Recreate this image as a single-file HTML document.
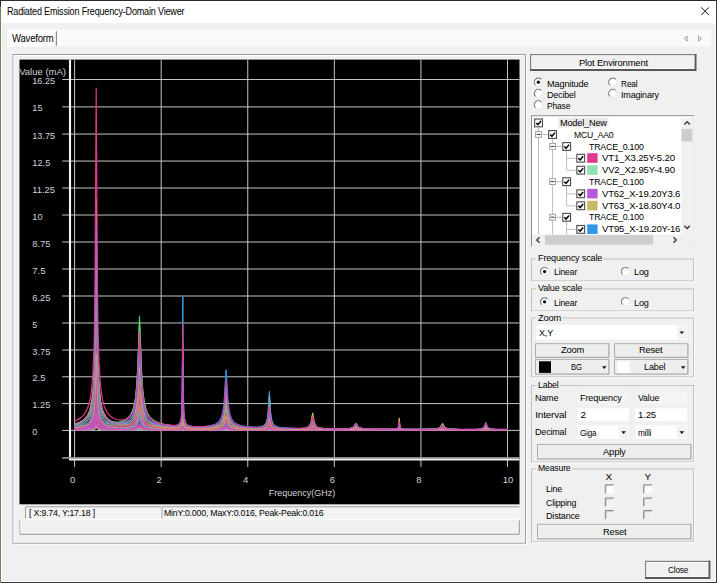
<!DOCTYPE html>
<html lang="en"><head><meta charset="utf-8"><title>Radiated Emission Frequency-Domain Viewer</title>
<style>
html,body{margin:0;padding:0;}
body{width:717px;height:583px;overflow:hidden;position:relative;background:#f0f0f0;
 font-family:"Liberation Sans",Arial,sans-serif;}
.b{position:absolute;box-sizing:border-box;}
.t{position:absolute;white-space:nowrap;line-height:12px;height:12px;transform-origin:0 50%;}
.plot{position:absolute;left:0;top:0;}
.ui{position:absolute;left:0;top:0;}
</style></head><body>
<svg class="ui" width="717" height="583" viewBox="0 0 717 583">
<rect x="0" y="0" width="717" height="583" fill="#fff"/>
<rect x="2" y="23" width="713" height="558" fill="#f0f0f0"/>
<rect x="0" y="0" width="717" height="1" fill="#2b2b2b"/>
<rect x="716" y="0" width="1" height="583" fill="#3a3a3a"/>
<rect x="0" y="582" width="717" height="1" fill="#3a3a3a"/>
<rect x="0" y="0" width="1" height="583" fill="#74835a"/>
<rect x="0" y="0" width="1" height="6.5" fill="#2b2b2b"/>
<path d="M701.2 7.4L708.9 15.1M708.9 7.4L701.2 15.1" stroke="#111" stroke-width="1" fill="none"/>
<rect x="7" y="29.6" width="704" height="16.8" fill="#fafafa"/>
<rect x="10.2" y="30.6" width="46" height="15.8" fill="#fff"/>
<rect x="55.8" y="31.2" width="1" height="14.6" fill="#707070"/>
<path d="M687.2 36.1V41.1L684.2 38.6Z M698.6 36.1V41.1L701.6 38.6Z" stroke="#8c8c8c" stroke-width="0.8" fill="none"/>
<rect x="13" y="54.5" width="512.5" height="488.8" fill="none" stroke="#9d9d9d" stroke-width="1"/>
<path d="M14 543V55.5H525" stroke="#fff" stroke-width="1" fill="none"/>
<path d="M526.5 54.5V544.3H13" stroke="#fff" stroke-width="1" fill="none" opacity="0.9"/>
<rect x="25" y="506.3" width="136" height="12.4" fill="#f3f3f3"/>
<path d="M25.5 518.7V506.8H161" stroke="#a0a0a0" stroke-width="1" fill="none"/>
<rect x="161.5" y="506.3" width="358" height="12.4" fill="#f3f3f3"/>
<path d="M162 518.7V506.8H519.5" stroke="#a0a0a0" stroke-width="1" fill="none"/>
<path d="M25 519.2H519.5" stroke="#fff" stroke-width="1" fill="none"/>
<path d="M20 520.5V534.3H519.3V520.5" stroke="#9a9a9a" stroke-width="1" fill="none"/>
<path d="M21 520.5V533.3" stroke="#fff" stroke-width="1" fill="none"/>
</svg>
<svg class="plot" width="717" height="583" viewBox="0 0 717 583">
<rect x="19.5" y="59.6" width="500" height="444.7" fill="#000"/>
<path d="M62.2 430.40H519.5M62.2 403.59H519.5M62.2 376.79H519.5M62.2 349.98H519.5M62.2 322.99H519.5M62.2 296.00H519.5M62.2 269.01H519.5M62.2 242.02H519.5M62.2 215.03H519.5M62.2 188.04H519.5M62.2 161.05H519.5M62.2 134.06H519.5M62.2 106.89H519.5M62.2 79.53H519.5" stroke="#c6c6c6" stroke-width="1" fill="none"/>
<path d="M74.60 59.6V467M161.18 59.6V467M247.76 59.6V467M334.34 59.6V467M420.92 59.6V467M507.50 59.6V467" stroke="#c6c6c6" stroke-width="1" fill="none"/>
<g fill="none" stroke-linejoin="round">
<polyline stroke="#90e0b0" stroke-width="0.9" points="74.6,426.7 82.1,425.6 84.6,424.8 87.5,423.2 89.5,421.4 91.0,419.1 93.0,412.7 94.3,401.9 95.0,388.4 96.2,327.8 97.8,395.6 99.0,409.6 100.7,417.1 103.0,421.0 105.9,423.1 108.9,423.9 112.9,424.2 119.4,423.3 123.9,421.7 128.3,418.6 130.8,415.5 133.2,410.3 134.3,406.2 136.3,392.8 137.8,369.6 139.5,324.2 142.1,384.5 143.3,397.4 144.8,406.2 147.2,413.5 148.7,416.3 150.7,418.7 155.2,421.9 161.7,424.3 171.1,425.9 177.1,426.0 179.6,425.1 181.1,422.5 181.8,417.9 182.3,405.7 182.8,350.2 183.2,399.8 183.7,416.6 184.2,420.5 184.9,423.7 186.1,425.4 188.5,426.7 195.0,427.5 208.5,427.9 215.6,427.6 219.6,426.8 221.8,425.6 223.4,423.5 224.4,420.8 226.1,412.0 227.9,420.7 228.7,423.1 229.8,424.9 230.8,426.0 232.8,427.0 235.3,427.7 239.8,428.2 254.7,428.7 264.5,428.3 266.4,427.5 267.7,426.1 268.3,424.2 269.4,418.4 270.5,424.2 271.3,426.4 272.0,427.1 274.1,428.3 280.1,428.9 301.5,429.1 307.8,428.9 310.0,428.3 311.0,427.7 312.7,424.7 314.4,427.7 315.7,428.5 318.5,429.0 323.4,429.2 350.3,429.2 353.7,428.5 356.0,427.1 359.4,428.9 363.7,429.3 397.2,429.5 398.4,429.2 399.3,427.7 399.9,429.1 401.5,429.5 432.7,429.5 439.8,429.0 442.6,427.2 444.1,428.5 445.3,429.0 449.3,429.5 481.6,429.5 483.9,429.2 485.6,427.8 487.8,429.1 491.0,429.6 507.5,429.7"/>
<polyline stroke="#b858d8" stroke-width="0.9" points="74.6,424.6 79.6,423.1 83.1,421.3 85.0,419.8 88.0,416.2 89.5,413.4 91.0,408.5 92.8,398.0 94.1,378.8 94.9,352.9 96.2,225.3 97.4,342.3 98.0,368.4 99.0,389.5 100.5,403.7 102.6,412.3 103.8,415.0 105.5,417.5 106.9,419.2 109.9,421.2 114.4,422.8 117.4,423.2 122.9,422.9 125.1,422.4 128.9,420.5 130.6,418.9 133.3,414.5 135.3,408.0 137.0,395.8 139.5,350.3 141.8,392.1 142.8,402.0 144.8,412.0 146.8,416.7 148.7,419.4 150.6,421.2 155.2,423.6 161.2,425.3 170.6,426.5 176.6,426.6 179.1,426.1 180.1,425.3 181.1,423.7 181.9,419.3 182.3,411.6 182.8,363.6 183.2,404.8 183.8,419.3 184.4,423.0 185.1,424.9 186.6,426.2 188.5,427.0 192.0,427.4 198.5,427.5 208.0,427.1 215.6,425.7 218.4,424.3 219.9,423.0 222.1,419.4 223.6,414.1 224.7,405.6 226.1,388.1 227.9,409.2 229.0,415.8 230.3,419.9 232.3,423.0 235.3,425.2 239.3,426.6 244.3,427.4 249.8,427.9 259.7,428.0 263.2,427.6 265.4,426.9 266.9,425.3 267.9,422.7 269.4,410.7 270.7,421.7 271.1,423.5 272.2,425.7 273.4,426.9 275.3,427.8 281.1,428.5 300.5,428.9 307.5,428.2 309.0,427.8 310.3,426.8 311.2,425.4 312.7,420.6 314.5,426.0 315.7,427.4 318.1,428.4 323.4,428.9 339.8,429.2 349.8,428.8 352.1,428.3 353.7,427.4 356.0,425.1 358.2,427.5 359.4,428.2 361.7,428.8 372.7,429.3 395.9,429.3 397.5,429.0 398.5,428.2 399.3,424.1 400.1,428.2 401.0,429.1 402.7,429.4 435.9,429.3 440.2,428.6 442.6,426.7 444.9,428.6 448.5,429.3 455.6,429.5 475.8,429.4 480.6,428.9 483.1,428.0 484.6,426.1 485.9,422.5 487.5,426.9 488.6,428.0 490.5,428.8 496.6,429.4 507.5,429.4"/>
<polyline stroke="#c8b868" stroke-width="0.9" points="74.6,424.0 79.6,422.3 82.6,420.6 85.0,418.5 87.5,415.3 89.5,411.1 90.8,406.5 92.8,393.8 94.0,374.6 94.9,342.7 96.2,197.9 97.5,335.8 98.2,366.5 99.2,386.8 100.7,401.5 101.7,406.6 103.0,411.2 105.9,416.7 108.4,419.3 110.9,421.0 114.4,422.4 117.9,423.2 121.9,423.6 125.5,423.2 127.7,422.6 130.8,420.7 132.3,419.2 133.8,416.6 135.3,412.6 136.8,404.6 137.8,393.6 139.5,367.4 142.1,403.0 143.4,410.9 145.1,416.5 147.2,420.1 148.4,421.4 151.0,423.1 154.8,424.7 160.7,426.0 175.1,427.3 179.6,427.3 181.1,426.8 181.9,425.0 182.3,421.7 182.8,403.4 183.4,422.9 183.9,425.7 185.1,427.2 192.0,428.0 208.0,428.0 215.9,427.3 219.6,426.0 221.8,424.3 222.8,422.7 223.6,420.8 224.7,416.0 226.1,406.0 227.6,416.1 228.7,421.0 230.3,424.2 232.3,425.9 236.3,427.3 242.8,428.1 252.2,428.2 259.7,427.6 261.7,427.1 263.5,426.4 265.6,424.5 267.2,420.9 268.3,412.8 269.4,395.4 270.7,415.1 271.3,419.5 272.1,422.5 273.6,425.0 275.6,426.6 277.7,427.3 281.6,428.1 289.1,428.6 300.0,428.5 304.8,428.0 307.8,426.9 310.0,424.8 310.9,422.6 312.7,412.8 314.4,422.3 315.9,425.6 317.2,426.8 318.9,427.6 323.9,428.5 339.0,429.1 349.2,428.7 353.1,427.3 356.0,423.8 359.2,427.6 362.8,428.7 373.2,429.3 395.0,429.1 397.0,428.6 398.3,427.1 399.3,418.2 399.8,425.0 400.5,427.5 401.9,428.8 404.0,429.2 413.5,429.5 426.8,429.4 436.7,428.8 439.8,427.5 441.0,426.2 442.3,423.6 442.8,423.4 444.1,426.2 445.8,427.9 449.8,429.0 460.2,429.5 479.3,429.5 482.1,429.4 484.1,428.8 485.9,427.0 487.6,428.8 490.2,429.4 507.5,429.7"/>
<polyline stroke="#3098e8" stroke-width="0.9" points="74.6,425.7 78.6,425.0 81.6,424.0 84.6,422.6 87.0,420.7 89.1,418.1 90.8,414.4 92.8,406.1 93.9,394.6 94.9,372.1 96.2,276.5 97.4,364.3 98.0,383.6 99.0,399.4 100.1,408.3 102.0,415.1 104.5,419.4 106.4,421.1 108.9,422.6 112.4,423.6 116.9,423.9 121.9,423.4 124.9,422.5 127.3,421.2 129.4,419.7 131.8,416.7 133.2,414.0 135.3,406.5 136.8,395.5 137.8,381.4 139.5,344.8 141.2,380.5 142.3,395.5 143.8,406.6 145.1,411.7 146.3,414.9 148.0,417.9 150.2,420.4 154.2,422.9 158.2,424.3 165.2,425.6 174.1,426.0 177.1,425.2 179.1,423.9 180.1,422.2 181.0,418.5 181.6,413.4 182.1,403.5 182.8,296.7 183.2,379.8 183.8,410.1 184.6,418.3 185.6,422.2 186.6,423.9 187.6,424.9 189.5,425.9 194.0,426.8 198.5,426.9 204.0,426.6 209.9,425.8 214.4,424.5 215.9,423.8 218.5,421.8 219.9,420.0 221.4,417.1 222.4,413.9 223.9,404.8 226.1,369.9 227.9,399.3 228.7,407.3 229.8,413.5 231.2,418.0 233.4,421.5 235.9,423.6 241.3,425.8 249.3,427.0 257.2,427.2 261.6,426.5 263.2,425.9 265.2,424.3 266.9,421.0 267.9,415.3 269.4,391.4 270.5,410.9 271.1,417.0 272.0,421.0 273.2,423.8 275.1,425.8 277.7,426.9 281.6,427.7 296.5,428.5 304.0,428.5 307.2,428.1 309.4,427.3 310.6,426.0 312.7,419.8 314.4,425.4 315.4,426.8 316.9,427.8 318.5,428.2 323.9,428.8 339.3,429.0 349.7,428.4 351.8,427.8 353.2,426.9 355.7,423.2 356.5,423.4 357.7,425.8 359.4,427.4 362.8,428.5 368.2,429.0 396.8,429.3 398.1,428.9 398.5,428.4 399.3,425.3 399.7,427.6 400.4,428.8 401.3,429.2 403.5,429.4 436.3,429.2 440.2,428.3 442.6,426.0 444.8,428.2 447.7,429.1 457.2,429.5 478.2,429.5 481.2,429.2 483.7,428.5 484.8,427.5 485.9,425.6 487.2,427.8 488.3,428.7 490.8,429.3 499.0,429.6 507.5,429.5"/>
<polyline stroke="#58d868" stroke-width="0.9" points="74.6,424.7 79.1,423.7 82.6,422.1 86.0,419.6 88.0,417.2 89.5,414.7 91.0,410.2 92.8,400.5 94.0,385.1 94.9,359.2 96.2,242.3 97.4,349.5 98.0,373.3 98.8,389.9 100.1,403.4 102.1,412.0 103.6,415.6 105.5,418.1 107.4,419.9 108.9,420.8 112.9,422.0 117.4,422.2 119.9,421.9 123.4,420.8 125.9,419.5 128.1,417.7 130.2,415.2 132.3,411.0 133.6,407.2 135.3,398.6 136.8,384.0 137.8,365.1 139.5,316.1 141.8,375.9 142.8,390.1 144.3,401.8 146.3,410.0 147.7,413.4 149.7,416.6 151.2,418.2 154.4,420.7 159.7,423.1 164.7,424.4 174.1,425.8 178.6,426.1 180.6,425.6 181.3,424.7 182.0,421.8 182.4,416.2 182.8,390.1 183.2,414.6 183.7,422.3 184.2,424.5 184.9,425.7 186.1,426.3 188.5,426.8 197.5,427.3 210.9,427.2 214.9,426.7 217.4,426.0 220.4,424.4 221.9,422.7 222.9,420.8 223.9,417.0 226.1,400.0 227.9,414.7 228.9,419.2 230.3,422.7 231.9,424.6 233.8,425.8 236.8,426.8 241.8,427.6 255.7,428.3 262.2,428.1 265.0,427.5 266.7,426.4 267.7,424.7 268.3,422.3 269.4,414.6 270.7,423.3 272.2,426.5 273.6,427.5 275.3,428.1 281.1,428.6 301.5,428.8 307.8,428.3 310.6,426.7 312.7,421.5 314.2,425.7 315.4,427.3 317.5,428.3 323.9,429.0 338.8,429.2 349.3,428.9 352.8,428.2 354.0,427.6 356.0,425.8 359.2,428.3 365.2,429.1 396.1,429.4 397.8,429.2 398.5,428.7 399.3,426.5 400.1,428.8 401.5,429.3 430.4,429.3 436.3,428.9 438.6,428.4 440.3,427.3 442.2,424.3 442.8,424.1 444.3,426.8 445.3,427.7 446.5,428.4 449.7,429.0 460.7,429.5 480.6,429.4 482.1,429.2 484.1,428.4 485.9,426.3 487.8,428.6 489.7,429.2 495.9,429.5 507.5,429.5"/>
<polyline stroke="#3098e8" stroke-width="0.7" points="74.6,429.8 84.6,429.9 92.8,429.4 94.7,428.5 96.2,425.0 97.4,428.0 98.6,429.0 101.5,429.6 108.9,429.9 134.8,429.7 137.3,429.2 139.3,428.1 142.3,429.4 145.5,429.8 180.1,430.0 182.1,429.7 182.8,428.0 183.2,429.3 184.1,429.9 194.0,430.1 220.3,430.0 223.9,429.7 226.1,429.0 229.4,429.8 240.3,430.1 266.0,430.0 269.6,429.6 270.5,429.9 277.7,430.1 309.4,430.1 312.1,429.8 329.9,430.1 355.5,429.8 368.2,430.1 396.8,430.1 399.4,429.8 403.5,430.1 507.5,429.9"/>
<polyline stroke="#58d868" stroke-width="0.7" points="74.6,427.4 77.1,427.3 82.6,426.2 87.0,424.5 89.5,422.6 90.5,421.2 92.5,416.7 93.9,409.0 94.9,395.5 96.2,338.8 97.4,390.8 98.0,402.4 98.8,410.5 100.1,417.1 101.1,419.7 102.3,421.6 103.6,423.1 105.5,424.3 108.9,425.6 115.9,426.4 119.9,426.2 125.9,425.2 129.8,423.4 131.5,422.0 133.6,419.5 135.7,414.1 136.8,408.7 137.8,399.9 139.5,377.2 141.2,399.4 142.5,410.1 144.3,417.0 146.3,420.8 148.7,423.2 151.2,424.6 154.4,425.7 158.2,426.6 164.7,427.4 174.1,427.9 178.1,427.5 179.6,426.8 180.6,425.8 181.3,423.9 182.2,416.3 182.8,370.9 183.2,407.6 183.7,419.6 184.2,423.2 184.9,425.5 186.1,426.9 188.5,427.9 197.5,428.6 203.5,428.7 213.4,428.5 218.8,427.7 221.9,426.2 223.4,424.4 224.4,421.9 226.1,414.2 227.9,422.0 228.7,424.0 229.3,425.2 230.8,426.6 232.3,427.3 236.8,428.4 241.8,428.8 254.2,428.9 262.2,428.3 265.0,427.3 266.0,426.5 267.3,424.5 268.3,420.1 269.4,409.9 270.7,421.4 271.3,423.9 272.2,425.7 273.6,427.2 275.3,428.0 281.1,428.9 300.5,429.2 304.8,428.9 307.8,428.4 310.6,426.5 312.7,420.6 314.2,425.3 315.4,427.2 317.5,428.4 319.9,428.9 324.5,429.3 349.3,429.5 354.0,428.9 356.0,428.0 358.9,429.2 363.2,429.6 395.5,429.6 397.5,429.1 398.4,428.2 399.3,423.6 399.8,427.3 400.4,428.5 401.5,429.3 403.5,429.6 436.3,429.6 440.3,429.0 442.8,427.7 444.3,428.8 448.1,429.6 477.9,429.7 483.4,429.2 485.9,427.2 487.8,429.0 489.7,429.5 507.5,429.8"/>
<polyline stroke="#d848c8" stroke-width="0.7" points="74.6,429.5 83.6,429.3 88.0,428.8 91.4,428.0 93.0,426.9 94.3,424.9 95.1,422.0 96.2,411.0 97.4,422.0 98.0,424.4 99.0,426.2 99.9,427.3 102.1,428.3 109.4,429.3 126.0,429.5 133.6,428.9 137.0,427.6 139.5,424.2 142.3,427.8 145.8,429.0 154.2,429.6 179.6,429.7 181.2,429.5 182.1,428.8 182.8,423.7 183.2,427.7 183.9,429.2 185.6,429.7 189.5,429.9 220.9,429.6 223.9,429.1 225.9,427.7 226.4,427.7 228.3,429.1 230.1,429.5 242.3,430.0 265.0,429.9 267.7,429.6 269.4,428.5 271.3,429.7 277.7,430.0 310.0,430.0 312.9,429.6 316.4,430.0 326.9,430.1 353.1,430.0 356.2,429.7 361.8,430.1 397.2,430.1 399.2,429.7 401.3,430.1 436.3,430.1 442.6,429.6 448.9,430.1 482.3,430.1 485.9,429.7 489.1,430.0 507.5,430.0"/>
<polyline stroke="#e07038" stroke-width="0.7" points="74.6,429.7 88.7,429.3 93.0,428.3 94.3,427.2 95.0,425.7 96.2,419.2 97.4,425.5 98.0,426.8 99.0,428.0 100.9,428.8 103.4,429.3 110.4,429.7 133.2,429.7 136.8,429.4 139.5,428.2 141.8,429.2 145.8,429.8 179.1,429.9 180.8,429.8 182.1,429.3 182.8,425.7 183.2,428.7 184.3,429.7 193.5,430.0 219.9,429.9 223.9,429.6 226.1,428.9 229.0,429.7 238.8,430.0 264.7,430.0 267.9,429.7 269.6,429.1 271.5,429.8 276.1,430.0 307.0,430.1 313.0,429.6 315.7,430.0 325.4,430.1 349.7,430.1 355.7,429.8 359.9,430.1 396.0,430.1 399.4,429.7 400.0,430.0 402.0,430.1 438.8,430.1 441.8,429.8 480.6,430.1 485.6,429.7 489.6,430.1 507.5,430.0"/>
<polyline stroke="#e060b0" stroke-width="0.7" points="74.6,429.9 84.6,430.0 92.9,429.6 95.1,428.6 96.2,426.7 97.8,429.0 99.5,429.6 109.9,430.0 132.8,429.8 137.3,429.3 139.5,428.2 141.3,429.1 144.2,429.7 163.7,430.0 181.0,430.0 182.2,429.8 182.9,428.7 183.1,429.4 183.7,429.9 188.0,430.1 219.6,430.0 224.3,429.8 226.5,429.4 228.9,429.9 246.8,430.1 267.1,430.0 269.4,429.5 271.3,430.0 278.6,430.1 308.0,430.1 313.0,429.8 314.2,430.0 323.9,430.1 395.8,430.1 399.3,429.8 401.9,430.1 507.5,430.0"/>
<polyline stroke="#e060b0" stroke-width="0.7" points="74.6,429.8 88.7,429.5 92.9,428.7 94.5,427.5 95.1,426.5 96.2,421.7 97.8,427.3 99.5,428.7 102.5,429.4 109.9,429.8 132.8,429.6 136.8,429.0 139.5,427.3 141.3,428.5 144.2,429.4 163.7,430.0 181.0,429.9 182.2,429.5 182.8,427.5 183.2,429.1 183.7,429.7 188.0,430.0 219.6,430.0 224.3,429.7 226.5,429.1 227.9,429.7 231.3,429.9 264.2,430.0 267.9,429.7 269.4,428.9 271.3,429.8 278.6,430.1 308.0,430.1 313.0,429.7 315.4,430.0 323.9,430.1 351.3,430.1 356.5,429.8 371.7,430.1 397.4,430.1 399.3,429.8 401.9,430.1 443.4,429.9 479.1,430.1 485.6,429.8 490.1,430.1 507.5,430.0"/>
<polyline stroke="#40c8d8" stroke-width="0.7" points="74.6,430.0 88.0,429.8 92.8,429.4 94.3,428.7 95.1,428.0 96.2,425.0 97.2,427.6 98.5,428.9 101.5,429.6 108.9,429.9 134.0,429.7 137.8,429.0 139.5,428.0 141.3,429.0 142.8,429.4 148.0,429.9 180.8,429.9 182.2,429.3 182.8,426.8 183.1,428.7 183.9,429.6 190.5,430.0 220.3,430.0 223.9,429.8 225.9,429.2 229.0,429.9 237.0,430.1 263.9,430.1 267.7,429.9 269.2,429.3 272.1,430.0 284.1,430.1 306.6,430.0 312.7,429.6 314.8,430.0 321.8,430.1 351.6,430.1 356.2,429.8 360.7,430.1 396.5,430.1 398.5,430.1 399.3,429.7 399.9,430.0 402.2,430.1 439.3,430.1 442.8,429.8 448.1,430.1 478.1,430.1 486.1,429.8 489.9,430.1 507.5,430.1"/>
<polyline stroke="#c050e0" stroke-width="0.7" points="74.6,429.3 81.6,429.0 88.5,428.0 91.2,427.0 93.0,425.3 94.0,423.3 94.9,419.4 96.2,401.7 97.4,418.0 98.8,424.0 100.1,426.1 102.3,427.4 105.5,428.2 110.4,428.6 118.4,428.6 126.8,427.9 131.8,426.5 133.6,425.4 135.8,422.9 137.0,420.1 139.5,406.6 141.8,418.9 143.4,423.0 144.6,424.7 146.3,425.9 149.3,427.2 152.3,427.9 160.2,428.7 175.1,429.2 179.1,429.0 181.1,428.5 181.9,427.3 182.3,424.9 182.8,412.8 183.6,426.6 184.1,427.9 184.8,428.6 187.1,429.2 208.5,429.4 214.4,429.1 219.4,428.5 221.8,427.7 222.9,427.0 223.9,425.8 226.1,419.8 227.9,424.9 229.3,427.0 230.5,427.7 233.4,428.6 239.2,429.2 258.2,429.5 265.0,429.0 266.9,428.3 267.7,427.5 268.6,425.7 269.4,422.5 270.6,426.8 272.2,428.4 274.6,429.2 280.6,429.6 307.2,429.8 310.6,429.5 312.4,428.3 312.9,428.3 314.9,429.5 320.0,429.8 348.7,429.9 352.3,429.8 356.0,429.0 357.7,429.5 361.3,429.8 395.9,429.9 398.3,429.6 399.3,427.9 399.8,429.2 400.7,429.7 404.5,430.0 435.1,430.0 440.6,429.7 442.3,429.2 444.9,429.8 451.2,430.0 478.8,429.9 483.9,429.5 486.1,428.5 487.5,429.5 491.6,429.9 507.5,429.9"/>
<polyline stroke="#e0388f" stroke-width="0.7" points="74.6,429.2 84.6,428.5 88.5,427.7 91.0,426.5 93.0,424.4 94.1,421.4 94.9,417.2 96.2,396.0 97.5,416.1 98.2,420.7 99.0,423.3 100.0,425.1 102.3,426.9 105.0,427.9 110.4,428.7 123.0,429.1 127.2,429.0 132.8,428.3 134.9,427.6 136.8,426.1 139.5,420.1 141.8,425.4 144.2,427.6 149.7,428.9 163.2,429.5 176.6,429.7 181.0,429.3 181.9,428.8 182.2,427.9 182.8,421.7 183.1,426.5 183.6,428.5 185.1,429.4 188.0,429.7 209.9,429.6 219.2,429.0 221.8,428.5 223.2,427.6 224.4,426.4 226.1,422.8 227.9,426.5 229.8,428.1 233.4,429.1 240.3,429.6 264.7,429.7 267.7,429.2 269.4,427.2 270.5,428.7 271.7,429.4 275.3,429.8 282.6,429.9 308.1,429.8 311.2,429.3 312.4,428.3 313.0,428.3 314.4,429.4 316.0,429.7 324.4,429.9 348.7,429.9 356.5,429.2 358.7,429.8 362.3,429.9 396.0,430.0 398.5,429.7 399.2,428.8 400.3,429.8 402.0,430.0 434.4,430.0 439.8,429.9 442.3,429.5 448.9,430.0 479.0,430.0 484.2,429.8 485.6,429.3 488.0,429.9 491.1,430.0 507.5,430.0"/>
<polyline stroke="#90e0b0" stroke-width="0.7" points="74.6,427.9 82.1,427.0 84.6,426.4 87.5,425.1 89.5,423.7 91.0,421.9 93.0,417.0 94.3,408.7 95.0,398.3 96.2,352.1 97.4,396.6 98.2,408.6 99.2,415.5 100.3,419.6 101.1,421.2 103.0,423.7 105.9,425.5 110.4,426.8 115.9,427.5 123.9,427.4 129.8,426.2 133.2,424.5 135.3,421.9 136.8,418.1 137.8,413.2 139.5,400.7 141.2,413.0 142.3,418.1 143.8,422.0 146.3,424.8 148.0,425.9 151.4,427.0 156.7,427.9 172.1,428.8 178.1,428.7 180.1,428.2 180.9,427.6 181.6,426.5 182.2,423.2 182.8,400.9 183.2,419.1 183.7,425.2 184.9,427.8 186.1,428.4 188.5,428.8 201.0,429.0 208.5,428.8 215.6,428.1 219.6,426.9 221.8,425.5 223.4,423.0 224.4,419.9 226.1,410.2 227.9,419.8 228.7,422.6 229.8,424.6 230.8,425.8 232.8,427.0 235.3,427.8 240.3,428.6 254.7,429.1 260.9,428.9 264.5,428.3 266.4,427.3 267.7,425.6 268.3,423.2 269.4,416.4 270.7,424.1 272.0,426.8 274.1,428.3 280.1,429.2 301.5,429.5 307.5,429.2 309.0,429.0 311.0,428.0 312.7,425.3 313.9,427.4 315.4,428.7 319.1,429.4 350.3,429.7 353.7,429.3 356.0,428.5 359.4,429.5 363.7,429.7 395.6,429.7 397.2,429.5 398.3,428.8 399.3,425.1 400.1,428.6 400.7,429.2 402.6,429.7 425.9,429.8 436.8,429.5 440.2,428.8 442.6,426.9 444.1,428.4 445.8,429.1 451.2,429.7 472.2,429.9 481.6,429.6 483.9,429.1 485.9,427.4 487.8,429.0 491.0,429.7 507.5,429.9"/>
<polyline stroke="#c8b868" stroke-width="0.7" points="74.6,429.3 84.1,428.8 87.5,428.3 90.2,427.5 92.8,425.6 94.0,423.3 94.9,419.3 96.2,401.6 97.5,418.4 98.0,421.5 99.2,424.8 100.5,426.5 103.0,427.8 106.9,428.6 110.9,429.0 123.4,429.2 127.7,429.0 132.8,428.3 135.3,427.4 136.8,426.2 139.5,420.3 142.3,426.1 143.8,427.4 147.2,428.6 154.8,429.3 163.7,429.6 175.1,429.6 179.6,429.3 181.3,428.7 182.1,427.1 182.8,416.2 183.2,424.8 183.9,428.1 185.1,429.1 189.0,429.7 212.4,429.7 220.4,429.4 222.8,428.9 223.9,428.4 226.1,426.1 228.7,428.6 233.3,429.5 247.8,429.8 262.4,429.6 265.6,429.2 267.2,428.6 268.3,427.2 269.4,424.3 270.7,427.6 272.4,429.0 275.6,429.5 281.6,429.8 300.0,429.9 307.8,429.6 310.9,429.0 312.7,427.4 313.9,428.7 315.9,429.4 327.9,430.0 349.2,430.0 356.0,429.5 362.8,430.0 396.0,430.0 398.3,429.8 399.2,428.7 400.1,429.7 402.2,430.0 436.7,430.0 441.0,429.6 442.8,429.1 444.5,429.7 449.8,430.0 479.3,430.0 484.1,429.8 485.9,429.2 486.9,429.7 490.2,430.0 507.5,430.0"/>
<polyline stroke="#5090e8" stroke-width="0.7" points="74.6,429.6 86.5,429.2 89.1,429.0 92.4,428.0 94.0,426.4 95.0,423.9 96.2,415.0 97.5,423.9 98.4,426.3 99.2,427.3 100.9,428.3 103.2,428.9 112.9,429.6 133.8,429.6 137.0,429.1 139.3,427.7 142.1,429.1 145.8,429.7 179.1,429.8 181.4,429.4 182.1,428.8 182.8,423.9 183.2,428.0 183.7,429.0 184.3,429.5 194.5,430.0 219.4,429.8 223.9,429.4 226.1,428.3 229.4,429.6 238.8,430.0 266.0,429.9 267.3,429.7 269.6,428.6 270.7,429.5 271.6,429.7 277.7,430.0 309.1,430.0 311.5,429.7 312.4,429.3 314.8,429.9 321.5,430.1 353.2,430.1 356.2,429.8 358.9,430.1 395.7,430.1 398.5,430.0 399.4,429.5 400.3,430.0 403.0,430.1 438.3,430.1 442.3,429.7 448.8,430.1 479.6,430.1 485.3,429.7 490.8,430.1 507.5,430.1"/>
<polyline stroke="#7070e8" stroke-width="0.7" points="74.6,426.1 78.1,425.4 83.1,423.7 84.6,422.9 88.0,420.0 90.0,416.8 91.0,414.4 92.8,406.8 94.0,394.5 94.9,374.0 96.2,281.4 97.4,366.3 98.0,385.3 99.0,400.6 100.5,410.9 102.5,416.7 104.0,419.2 105.9,421.2 109.9,423.4 113.9,424.3 117.4,424.6 124.7,423.6 127.7,422.3 129.8,420.9 131.8,418.6 133.6,415.5 135.7,408.1 137.0,398.9 139.5,357.5 141.3,388.6 142.5,402.7 144.2,411.8 145.1,414.5 146.7,418.0 148.2,419.9 150.7,422.2 153.7,423.7 158.2,425.2 167.2,426.6 172.1,426.9 176.6,426.6 179.1,425.7 180.6,423.7 181.3,421.2 182.1,411.1 182.8,342.4 183.2,396.9 183.8,416.2 184.5,421.9 185.6,424.7 187.1,426.2 189.0,427.0 196.5,427.7 209.4,427.3 215.9,426.0 218.4,424.8 219.9,423.5 221.8,421.1 223.6,415.4 224.7,407.4 226.1,391.4 227.9,410.9 228.9,416.3 230.1,420.3 231.9,423.2 234.8,425.4 238.8,426.8 242.8,427.5 258.2,428.4 262.6,428.2 265.2,427.6 266.9,426.3 267.9,424.1 269.4,414.6 270.7,423.3 271.3,425.3 272.2,426.6 274.3,427.9 279.6,428.7 294.5,429.1 307.5,428.8 310.6,427.7 312.7,424.1 314.5,427.5 316.4,428.6 324.2,429.3 349.2,429.3 352.8,428.9 356.2,427.6 359.4,429.0 363.7,429.4 395.5,429.6 398.1,429.1 398.7,428.3 399.3,426.1 400.3,429.0 402.9,429.5 437.8,429.5 439.8,429.2 442.8,427.7 445.3,429.2 448.8,429.6 478.6,429.6 481.6,429.3 483.9,428.6 485.9,426.2 487.8,428.6 490.5,429.4 507.5,429.7"/>
<polyline stroke="#d848c8" stroke-width="0.7" points="74.6,424.1 78.6,423.0 83.6,420.2 85.5,418.4 88.0,414.9 89.5,411.5 91.0,406.4 92.9,392.8 94.1,373.6 95.0,338.5 96.2,204.2 97.4,333.4 98.0,362.1 99.0,385.1 100.3,399.7 102.5,410.1 105.0,415.7 106.9,418.3 109.9,420.8 115.9,423.2 118.9,423.7 124.4,423.8 126.0,423.7 129.3,422.6 131.9,420.8 133.6,418.6 135.7,413.1 137.0,406.3 139.5,375.0 141.8,403.7 142.8,410.7 144.6,417.1 146.7,420.6 149.7,423.2 154.2,425.1 161.2,426.4 169.6,427.2 176.6,427.3 179.6,426.8 181.0,425.5 181.9,422.3 182.3,416.7 182.8,382.5 183.2,412.0 183.6,420.9 184.1,424.1 184.8,425.9 186.1,427.0 188.0,427.5 198.0,427.9 209.9,427.2 215.4,426.1 218.5,424.6 219.9,423.4 222.1,420.1 223.9,413.1 226.1,390.5 228.3,413.1 230.1,420.1 231.8,423.0 234.1,424.9 238.8,426.7 242.3,427.4 257.2,428.3 262.4,428.2 265.0,427.7 266.6,426.6 267.7,425.0 269.4,415.1 270.5,422.6 271.3,425.5 273.1,427.5 277.7,428.5 290.6,429.0 306.6,428.8 310.0,427.9 311.2,426.5 312.7,423.1 314.4,426.9 316.4,428.3 319.7,428.9 326.9,429.2 350.7,429.3 353.1,429.1 356.2,428.1 358.9,429.1 362.3,429.4 395.5,429.5 397.2,429.3 398.4,428.7 399.3,425.1 400.3,428.8 401.3,429.3 402.7,429.4 436.3,429.4 440.3,428.7 442.6,426.9 444.5,428.6 446.5,429.2 448.9,429.4 478.1,429.6 483.1,429.1 484.1,428.6 485.9,426.4 487.5,428.6 489.9,429.3 507.5,429.6"/>
<polyline stroke="#b858d8" stroke-width="0.7" points="74.6,428.7 84.6,427.7 88.7,426.4 91.4,424.2 93.0,421.4 94.1,417.1 95.0,409.1 96.2,378.4 97.5,409.1 98.2,415.9 99.2,420.5 100.5,423.4 102.6,425.7 106.9,427.4 111.9,428.2 118.4,428.6 126.0,428.7 130.6,428.2 134.0,427.3 136.1,425.9 137.0,424.7 139.5,417.4 142.3,425.0 144.3,427.0 146.8,428.0 150.6,428.7 161.2,429.3 172.1,429.5 179.1,429.1 181.1,428.3 181.8,427.1 182.1,425.6 182.8,409.7 183.2,422.4 183.8,427.0 185.1,428.7 188.5,429.4 208.0,429.6 219.9,429.1 222.4,428.5 223.9,427.5 225.8,424.2 226.4,424.0 228.4,427.5 230.3,428.6 232.3,429.1 246.3,429.7 261.2,429.6 265.4,429.2 267.3,428.4 268.3,427.0 269.4,424.0 270.7,427.5 272.6,429.0 276.4,429.5 283.1,429.8 309.0,429.8 311.2,429.5 312.9,428.6 313.9,429.3 315.7,429.7 327.9,429.9 349.8,429.9 354.0,429.5 356.0,428.9 359.4,429.7 365.7,429.9 397.0,430.0 398.5,429.8 399.3,428.9 400.1,429.8 402.3,430.0 433.9,430.0 440.2,429.8 442.8,429.2 444.9,429.7 450.3,430.0 480.6,430.0 484.2,429.7 485.6,429.1 487.5,429.7 490.5,430.0 507.5,429.8"/>
<polyline stroke="#e07038" stroke-width="0.7" points="74.6,428.5 82.6,427.8 86.5,426.9 88.7,426.1 91.2,424.1 93.0,420.8 94.3,414.9 95.0,407.6 96.2,374.7 97.4,406.3 98.0,413.3 99.0,419.1 100.5,422.9 102.5,425.1 105.5,426.7 110.4,427.8 117.9,428.3 124.3,428.1 129.8,427.4 133.2,426.2 135.3,424.3 136.8,421.7 139.5,409.3 141.8,420.2 142.8,422.8 144.3,424.9 147.2,426.8 150.1,427.7 155.2,428.4 161.7,428.9 172.1,429.2 179.1,429.0 180.8,428.5 181.6,427.7 182.2,425.6 182.8,410.7 183.2,422.8 183.8,427.0 184.8,428.5 186.1,428.9 188.5,429.1 209.4,429.1 215.6,428.5 219.9,427.5 222.5,425.9 223.9,423.4 226.1,414.5 228.4,423.6 230.3,426.4 233.8,428.0 240.3,428.9 257.7,429.4 264.7,429.0 266.9,428.1 267.9,427.0 269.4,421.9 270.5,426.0 271.5,427.8 274.1,429.0 279.1,429.4 294.5,429.7 307.0,429.4 310.5,428.5 311.5,427.6 312.7,425.6 314.4,428.1 315.7,428.9 318.9,429.4 325.4,429.7 349.7,429.8 354.0,429.4 355.7,428.8 359.9,429.7 362.8,429.8 396.0,429.9 398.0,429.7 398.8,429.2 399.3,428.2 400.0,429.5 402.0,429.9 429.2,429.9 438.8,429.6 440.3,429.3 442.8,428.2 444.8,429.3 448.9,429.8 476.9,429.9 481.2,429.7 483.9,429.3 485.9,427.8 487.8,429.3 489.6,429.7 507.5,429.9"/>
<polyline stroke="#e0388f" stroke-width="0.7" points="74.6,428.0 81.6,427.1 84.6,426.3 88.5,424.4 91.0,421.6 92.9,416.8 94.1,409.8 94.9,399.7 96.2,349.8 97.5,397.3 98.2,408.0 99.0,414.1 100.0,418.3 102.3,422.7 105.0,425.0 110.4,426.9 114.4,427.5 123.0,428.0 129.3,427.5 132.8,426.6 134.9,425.3 136.8,422.4 137.8,419.3 139.5,411.1 141.2,419.1 142.8,423.4 144.2,425.3 147.2,427.1 153.1,428.3 160.7,428.8 173.6,429.1 179.6,428.6 181.2,427.4 182.1,424.6 182.8,402.5 183.1,418.3 183.8,425.7 184.3,427.2 185.1,428.1 188.0,429.0 206.5,429.3 214.9,428.9 219.2,428.3 221.8,427.4 223.2,426.0 224.4,424.0 226.1,418.1 227.9,424.1 228.7,425.6 229.8,426.8 231.8,427.9 233.4,428.4 240.3,429.2 254.7,429.5 264.7,429.1 266.9,428.3 267.7,427.6 269.4,422.4 270.5,426.3 271.7,428.2 275.3,429.3 282.6,429.6 308.1,429.6 311.2,428.9 312.4,427.7 313.0,427.7 314.4,429.1 316.0,429.5 324.4,429.8 348.7,429.7 353.2,429.2 355.7,428.2 356.5,428.2 358.7,429.2 365.2,429.8 396.0,429.9 398.5,429.5 399.2,428.3 400.3,429.6 402.0,429.9 430.4,429.9 439.8,429.4 442.6,428.0 445.3,429.4 448.9,429.8 474.9,429.9 482.6,429.6 484.2,429.2 485.9,427.9 488.0,429.4 490.2,429.7 507.5,429.9"/>
<polyline stroke="#d848c8" stroke-width="0.7" points="74.6,429.8 88.0,429.7 93.0,429.2 94.5,428.4 95.1,427.7 96.2,424.3 97.4,427.7 98.4,428.7 101.0,429.4 109.4,429.9 133.6,429.8 137.0,429.4 139.5,428.3 142.8,429.5 148.7,429.9 181.0,429.9 182.2,429.6 182.8,427.9 183.2,429.3 183.9,429.8 189.5,430.1 220.9,429.9 223.9,429.7 225.9,429.1 230.1,429.9 242.3,430.1 266.2,430.0 269.4,429.5 271.3,430.0 277.7,430.1 310.0,430.1 312.9,429.8 326.9,430.1 356.2,429.9 397.2,430.1 399.2,429.8 401.3,430.1 436.3,430.1 442.2,429.9 446.5,430.1 507.5,430.0"/>
<polyline stroke="#90e0b0" stroke-width="0.7" points="74.6,429.4 86.5,428.9 90.8,427.9 93.0,426.4 94.0,424.8 94.9,421.6 96.2,407.8 97.4,420.6 98.2,423.9 99.2,426.0 100.3,427.1 103.4,428.4 112.9,429.3 123.9,429.6 133.2,429.4 137.4,428.5 139.8,426.8 141.2,428.2 142.3,428.7 146.3,429.5 161.7,429.9 180.1,429.8 181.6,429.4 182.2,428.7 182.8,424.1 183.2,427.9 184.0,429.4 184.9,429.7 189.5,429.9 212.4,429.8 219.6,429.5 223.4,428.8 224.3,428.3 225.9,426.4 226.4,426.4 227.9,428.1 229.8,429.1 239.8,429.8 264.5,429.8 267.7,429.3 269.4,427.7 270.5,428.9 272.6,429.7 280.1,430.0 309.0,430.0 312.7,429.4 315.7,430.0 323.4,430.0 350.3,430.1 356.0,429.7 363.7,430.1 397.2,430.1 399.2,429.7 401.5,430.1 428.4,430.1 438.8,430.0 442.6,429.5 444.1,429.9 449.3,430.1 481.6,430.1 486.4,429.7 491.0,430.1 507.5,430.0"/>
<polyline stroke="#d848c8" stroke-width="0.7" points="74.6,429.3 83.6,428.9 88.0,428.3 91.4,427.1 93.0,425.7 94.3,422.8 95.1,418.8 96.2,403.5 97.4,418.8 98.0,422.1 99.0,424.7 99.9,426.1 102.1,427.6 105.0,428.4 109.4,428.9 126.0,429.0 131.1,428.5 133.6,427.9 135.7,426.7 137.0,425.4 139.5,419.1 141.2,423.8 142.3,425.7 144.2,427.3 146.3,428.1 153.1,429.1 161.2,429.5 173.1,429.6 179.6,429.2 181.2,428.6 182.1,426.8 182.8,414.8 183.2,424.3 183.9,427.9 184.6,428.8 185.6,429.2 189.5,429.6 211.9,429.6 220.9,428.8 223.9,427.2 226.1,423.2 228.3,427.2 230.1,428.4 234.1,429.2 242.3,429.7 265.0,429.5 267.7,428.6 269.4,425.5 270.7,428.2 271.3,428.8 273.1,429.4 277.7,429.8 306.6,429.8 310.0,429.6 312.7,428.2 314.4,429.3 317.9,429.8 347.8,429.9 353.1,429.7 356.2,429.0 358.9,429.7 362.3,429.9 395.5,430.0 398.4,429.7 399.3,428.3 400.3,429.7 405.0,430.0 436.3,430.0 440.3,429.9 442.6,429.4 444.5,429.8 448.9,430.0 481.2,430.0 484.1,429.9 485.9,429.4 489.1,430.0 507.5,430.0"/>
<polyline stroke="#e0388f" stroke-width="0.7" points="74.6,429.3 84.6,428.6 88.5,427.9 91.0,426.8 93.0,424.9 94.1,422.2 94.9,418.3 96.2,398.9 97.5,417.3 98.2,421.5 99.0,423.9 100.0,425.6 101.7,426.9 105.0,428.1 110.4,428.8 123.0,429.1 127.2,429.0 132.8,428.3 134.9,427.6 136.8,426.0 139.5,419.9 141.2,424.2 142.8,426.6 144.2,427.6 147.2,428.5 156.2,429.3 171.1,429.7 179.6,429.4 181.0,429.1 182.1,427.8 182.8,418.5 183.1,425.1 183.6,427.9 184.3,428.9 185.1,429.2 188.0,429.6 206.5,429.8 219.2,429.4 221.8,429.0 223.2,428.5 224.4,427.7 226.1,425.3 228.4,428.1 229.8,428.7 234.5,429.5 240.3,429.7 264.7,429.5 267.7,428.7 269.4,425.7 270.5,428.0 271.7,429.0 275.3,429.7 282.6,429.9 308.1,429.9 311.2,429.6 313.0,429.0 315.1,429.8 324.4,430.0 348.7,430.0 356.5,429.4 362.3,430.0 396.0,430.0 398.5,429.9 399.2,429.5 400.3,430.0 402.0,430.0 430.4,430.0 439.8,429.9 442.6,429.3 445.3,429.9 448.9,430.0 474.9,430.0 482.6,430.0 484.2,429.8 485.6,429.3 488.0,429.9 491.1,430.0 507.5,430.0"/>
<polyline stroke="#5090e8" stroke-width="0.7" points="74.6,429.6 86.5,429.2 89.1,428.9 92.4,427.9 94.0,426.2 95.0,423.6 96.2,414.4 97.5,423.7 98.6,426.4 99.7,427.6 101.5,428.4 108.4,429.3 124.4,429.4 129.3,429.1 133.3,428.4 135.3,427.7 137.0,426.3 139.5,421.2 142.1,426.3 143.8,427.6 145.8,428.4 153.1,429.3 165.7,429.7 179.1,429.7 181.4,429.4 182.4,428.0 182.8,424.0 183.2,427.8 183.7,429.0 184.8,429.6 188.0,429.7 208.9,429.8 219.4,429.4 221.9,429.0 223.9,428.2 226.1,425.5 227.9,427.7 229.4,428.7 233.4,429.5 240.3,429.8 265.2,429.7 267.3,429.3 269.4,427.2 270.7,428.9 271.6,429.3 277.7,429.9 306.5,429.9 310.6,429.4 312.4,428.3 314.8,429.5 322.4,430.0 350.8,430.0 356.2,429.4 358.9,429.9 369.7,430.0 395.7,430.1 398.5,429.9 399.4,429.5 400.3,430.0 403.0,430.1 438.3,430.0 442.3,429.6 448.8,430.0 479.6,430.1 485.6,429.5 490.8,430.0 507.5,430.0"/>
<polyline stroke="#e0388f" stroke-width="0.7" points="74.6,427.5 81.6,426.3 84.6,425.3 88.5,422.9 91.0,419.4 92.9,413.3 94.1,404.5 94.9,391.7 96.2,328.4 97.4,386.3 98.0,399.3 99.0,409.9 100.5,416.9 102.3,420.7 105.0,423.6 106.4,424.6 110.4,426.1 114.4,426.9 123.0,427.5 129.3,427.2 132.8,426.2 134.9,424.8 136.8,421.8 137.8,418.4 139.5,409.7 141.2,418.3 142.8,422.9 144.2,424.9 147.2,426.8 153.1,428.1 159.7,428.6 173.6,429.0 179.6,428.6 181.0,427.8 182.1,424.9 182.8,404.3 183.1,419.0 183.8,426.0 184.3,427.4 185.1,428.1 188.0,429.0 206.5,429.2 214.9,428.9 219.2,428.3 221.8,427.3 223.2,426.0 224.4,424.0 226.1,418.1 228.4,425.1 229.8,426.7 231.8,427.9 234.5,428.6 244.8,429.3 254.7,429.3 262.8,428.9 265.7,428.1 266.9,427.3 267.7,426.1 268.6,422.9 269.4,417.8 270.5,424.0 271.7,427.0 273.1,428.1 275.3,428.8 282.6,429.4 299.5,429.6 308.0,429.3 310.6,428.5 311.8,427.3 312.4,426.0 313.0,426.1 314.4,428.3 316.0,429.0 324.4,429.7 348.7,429.7 353.6,429.4 355.7,428.7 358.7,429.5 362.3,429.7 396.0,429.8 398.5,429.3 399.2,427.7 400.3,429.5 402.0,429.8 434.4,429.9 439.8,429.6 442.6,428.8 445.3,429.6 448.9,429.8 482.6,429.9 484.2,429.7 485.6,429.0 488.0,429.8 491.1,429.9 507.5,429.9"/>
<polyline stroke="#b858d8" stroke-width="0.7" points="74.6,429.9 88.7,429.8 93.0,429.3 95.0,428.2 96.2,425.3 97.5,428.2 99.2,429.2 106.9,429.9 134.4,429.8 137.0,429.6 139.5,428.7 141.7,429.5 146.8,429.9 181.0,430.0 182.3,429.6 182.8,428.4 183.1,429.4 184.1,429.9 192.0,430.1 219.9,429.9 223.9,429.7 226.4,428.9 227.9,429.6 231.2,429.9 246.3,430.1 265.4,430.0 269.4,429.5 272.6,430.0 283.1,430.1 310.3,430.0 312.4,429.7 314.5,430.0 330.9,430.1 507.5,429.9"/>
<polyline stroke="#7070e8" stroke-width="0.7" points="74.6,427.6 83.1,426.0 88.0,423.5 90.0,421.4 91.0,419.8 92.8,414.7 94.0,406.6 94.9,393.0 96.2,331.9 97.4,387.9 98.0,400.5 99.0,410.6 100.5,417.5 102.5,421.3 104.0,423.0 105.9,424.4 110.9,426.3 117.4,427.1 124.7,427.2 129.8,426.3 133.6,424.4 135.7,421.6 137.0,418.1 139.5,402.3 141.3,414.2 142.5,419.6 144.2,423.0 146.7,425.4 152.3,427.3 160.7,428.3 172.1,428.7 179.1,428.1 180.7,427.0 181.3,425.9 182.1,421.1 182.8,388.6 183.2,414.4 183.8,423.9 184.5,426.2 185.6,427.6 187.1,428.3 189.5,428.7 196.5,429.0 209.4,428.8 215.9,428.1 219.9,426.9 221.8,425.8 223.6,423.0 224.4,420.5 226.1,411.5 227.9,420.9 228.9,423.5 230.1,425.4 231.9,426.8 234.8,427.8 242.8,428.8 258.2,429.0 262.6,428.6 265.2,427.8 266.9,426.4 267.9,424.1 269.4,414.3 270.7,423.3 271.3,425.3 272.2,426.7 274.3,428.1 279.6,429.0 297.0,429.4 304.0,429.2 307.5,428.8 309.1,428.2 310.6,427.1 312.7,422.2 314.5,426.7 316.4,428.3 319.4,429.1 324.2,429.4 349.2,429.6 352.8,429.2 356.2,428.2 359.4,429.4 363.7,429.7 395.5,429.7 398.1,429.1 398.7,428.1 399.3,425.5 400.3,429.0 401.4,429.5 402.9,429.7 437.8,429.7 439.8,429.5 442.8,428.4 445.3,429.5 448.8,429.8 478.6,429.9 483.9,429.5 485.9,428.4 487.1,429.2 488.6,429.6 507.5,429.9"/>
<polyline stroke="#d848c8" stroke-width="0.7" points="74.6,428.1 78.6,427.8 83.6,427.0 88.0,425.3 90.0,423.7 91.4,422.0 93.0,418.1 94.3,410.5 95.0,401.0 96.2,358.8 97.4,399.5 98.0,408.6 99.0,415.8 99.9,419.5 102.1,423.3 105.0,425.5 109.4,426.9 117.9,427.6 126.0,427.2 131.1,425.9 133.6,424.2 135.7,421.2 137.0,417.6 139.5,401.0 141.2,413.3 142.3,418.3 144.2,422.7 146.3,424.9 148.7,426.3 153.1,427.4 161.2,428.3 174.1,428.6 176.6,428.4 179.6,427.5 181.2,425.4 182.1,419.6 182.8,381.4 183.2,411.7 183.9,423.2 184.6,425.9 185.6,427.2 187.1,428.1 189.5,428.6 198.0,429.0 209.9,428.6 215.4,427.9 219.9,426.4 222.1,424.6 223.9,420.8 226.1,408.3 228.3,420.8 230.1,424.6 231.8,426.2 234.1,427.3 242.3,428.7 254.7,429.2 265.0,428.9 266.6,428.3 267.7,427.5 269.4,422.2 270.5,426.2 271.3,427.7 273.1,428.8 277.7,429.3 306.6,429.5 310.0,429.0 311.0,428.4 312.7,426.5 314.4,428.5 316.4,429.2 326.9,429.7 350.7,429.6 353.1,429.3 356.2,428.2 358.9,429.3 362.3,429.7 395.5,429.8 397.2,429.7 398.4,429.2 399.3,426.7 400.3,429.3 401.6,429.7 405.0,429.8 436.3,429.8 440.3,429.4 442.6,428.3 444.5,429.3 448.9,429.8 481.2,429.8 484.1,429.5 485.9,428.6 487.5,429.5 489.1,429.7 507.5,429.9"/>
<polyline stroke="#3098e8" stroke-width="0.7" points="74.6,428.1 78.6,427.8 83.6,427.1 87.0,426.0 89.1,424.9 90.8,423.3 92.8,419.6 93.9,414.6 94.9,404.8 96.2,363.4 97.4,401.4 98.0,409.8 99.0,416.8 100.1,420.6 102.0,423.5 104.5,425.4 108.9,426.7 116.9,427.1 125.4,426.1 129.4,424.7 131.8,423.1 133.2,421.6 135.3,417.7 136.8,412.0 137.8,404.5 139.5,385.3 141.2,404.0 142.3,412.0 144.3,419.0 146.3,422.1 148.0,423.7 150.2,425.0 154.2,426.4 158.2,427.1 165.2,427.9 174.6,428.1 178.1,427.7 180.1,426.6 180.9,425.3 181.6,422.7 182.2,416.4 182.8,371.5 183.2,408.0 183.8,421.3 184.6,424.8 185.6,426.5 187.6,427.7 189.5,428.2 198.5,428.7 209.9,428.4 217.0,427.5 220.3,426.1 222.4,424.0 223.9,420.7 226.1,407.6 227.9,418.7 228.7,421.6 229.8,423.9 231.2,425.6 233.4,426.9 235.9,427.7 240.8,428.4 257.2,428.9 261.6,428.6 265.2,427.7 266.9,426.3 267.7,424.8 268.3,422.1 269.4,414.0 270.5,422.1 271.1,424.7 272.0,426.3 273.2,427.5 275.1,428.3 281.6,429.1 300.9,429.4 307.2,429.1 309.4,428.6 310.5,428.0 312.7,424.5 314.4,427.5 316.4,428.7 319.4,429.3 325.9,429.5 349.7,429.4 353.2,428.8 355.7,427.2 356.5,427.2 358.9,428.8 362.8,429.5 395.8,429.6 397.3,429.4 398.3,428.8 399.3,424.9 399.7,427.5 400.4,428.9 401.3,429.4 403.5,429.7 436.3,429.8 440.3,429.4 442.3,428.5 444.8,429.4 447.7,429.7 478.2,429.9 482.9,429.6 484.8,429.1 485.6,428.4 488.3,429.6 490.8,429.8 507.5,429.7"/>
<polyline stroke="#e0388f" stroke-width="0.7" points="74.6,428.1 84.6,426.5 88.5,424.7 91.0,422.1 92.9,417.5 94.1,410.9 94.9,401.4 96.2,354.1 97.5,399.1 98.2,409.1 99.0,415.0 100.0,418.9 102.3,423.0 105.0,425.2 110.4,427.0 114.4,427.5 123.8,427.6 129.3,426.8 132.8,425.4 134.9,423.5 136.8,419.6 137.8,415.3 139.5,404.1 141.8,417.8 142.8,421.0 144.2,423.6 147.2,426.0 149.7,427.0 153.1,427.7 159.7,428.4 176.6,429.0 179.6,428.7 181.0,428.0 181.9,426.5 182.3,423.1 182.8,407.5 183.1,420.4 183.8,426.5 184.3,427.7 185.1,428.3 188.0,429.0 209.9,429.2 219.2,428.3 221.8,427.4 223.2,426.1 224.4,424.1 226.1,418.3 227.9,424.2 228.7,425.7 229.8,426.8 233.4,428.4 240.3,429.2 264.7,429.5 267.7,428.8 269.4,426.3 270.5,428.2 271.7,429.1 275.3,429.6 282.6,429.7 308.0,429.4 309.7,429.2 311.2,428.4 312.4,426.7 313.0,426.7 314.4,428.6 316.0,429.2 324.4,429.8 348.7,429.8 353.6,429.5 356.5,429.0 358.7,429.6 362.3,429.8 396.0,429.9 398.5,429.3 399.2,427.7 400.3,429.5 402.0,429.8 434.4,429.9 439.8,429.6 442.6,428.7 445.3,429.6 451.2,429.9 482.6,429.9 484.2,429.7 485.6,429.0 488.0,429.8 491.1,429.9 507.5,429.9"/>
<polyline stroke="#e0388f" stroke-width="0.7" points="74.6,429.9 88.5,429.6 93.0,429.0 94.9,427.7 96.2,423.6 97.2,426.9 98.6,428.6 101.7,429.4 108.9,429.8 132.8,429.6 136.8,428.9 139.5,426.9 141.8,428.7 143.8,429.3 147.2,429.6 179.6,429.8 181.0,429.7 182.1,429.1 182.8,424.9 183.1,427.9 183.6,429.2 185.1,429.7 188.0,429.9 219.2,429.8 221.8,429.6 224.4,429.0 226.1,427.8 228.4,429.2 230.3,429.5 240.3,429.9 264.7,430.0 267.7,429.8 269.4,429.2 271.7,429.9 282.6,430.1 309.7,430.0 313.0,429.6 315.1,430.0 324.4,430.1 348.7,430.1 355.0,429.7 362.3,430.1 396.0,430.1 398.5,430.0 399.2,429.6 400.4,430.1 408.5,430.1 439.8,430.0 443.3,429.7 448.9,430.1 482.6,430.1 485.6,429.8 488.0,430.1 507.5,430.0"/>
<polyline stroke="#40c8d8" stroke-width="0.7" points="74.6,430.0 88.0,429.8 92.8,429.4 94.3,428.7 95.1,428.0 96.2,425.1 97.2,427.7 98.5,428.9 101.5,429.6 108.9,429.9 134.0,429.9 137.8,429.5 139.5,428.8 141.3,429.5 148.0,430.0 180.8,429.9 182.2,429.5 182.8,427.3 183.1,428.9 183.9,429.7 190.5,430.1 220.3,430.0 223.9,429.8 225.9,429.3 229.0,429.9 237.0,430.1 263.9,430.1 267.7,429.9 269.2,429.4 272.1,430.0 284.1,430.1 312.9,429.8 321.8,430.1 357.2,429.9 396.5,430.1 399.3,429.7 402.2,430.1 442.8,429.9 478.1,430.1 486.1,429.8 489.9,430.1 507.5,430.1"/>
<polyline stroke="#40c8d8" stroke-width="0.7" points="74.6,430.0 88.0,429.8 92.8,429.4 94.3,428.8 95.1,428.2 96.2,425.4 97.2,427.8 98.5,429.0 101.5,429.6 108.9,429.9 134.0,429.9 137.8,429.4 139.5,428.7 142.8,429.6 148.0,430.0 180.8,430.0 182.3,429.7 182.8,428.6 183.6,429.9 190.5,430.1 220.3,430.0 223.9,429.7 225.9,429.0 229.8,429.8 247.8,430.1 263.9,430.1 269.2,429.6 272.1,430.0 284.1,430.1 306.6,430.1 312.7,429.7 313.9,430.0 321.8,430.1 357.2,429.9 360.7,430.1 396.5,430.1 399.3,429.8 402.2,430.1 443.4,429.9 478.1,430.1 486.1,429.8 489.9,430.1 507.5,430.1"/>
<polyline stroke="#7070e8" stroke-width="0.7" points="74.6,427.9 83.1,426.6 88.0,424.5 90.0,422.8 91.0,421.5 92.8,417.3 94.0,410.5 94.9,399.2 96.2,348.5 97.4,395.0 98.0,405.5 99.0,413.9 100.5,419.6 102.5,422.7 105.0,424.7 106.9,425.6 109.9,426.4 117.4,427.0 124.7,426.5 129.8,424.9 131.8,423.6 133.6,421.9 135.7,417.7 137.0,412.5 139.5,389.2 141.3,406.8 142.5,414.7 144.2,419.8 146.7,423.3 150.1,425.4 152.3,426.2 160.7,427.7 172.1,428.3 176.6,428.1 179.1,427.5 180.6,426.2 181.3,424.7 182.1,418.5 182.8,376.5 183.2,409.8 183.8,422.1 184.5,425.1 185.6,426.9 187.1,427.8 189.5,428.4 196.5,428.9 209.4,428.8 215.9,428.4 219.9,427.4 221.8,426.5 222.8,425.4 223.9,423.5 226.1,414.7 227.9,422.5 228.9,424.6 230.1,426.2 231.9,427.3 234.8,428.2 242.8,429.0 258.2,429.2 265.2,428.6 266.9,427.8 267.9,426.3 269.4,420.2 270.5,425.2 271.6,427.4 272.4,428.1 274.3,428.8 277.7,429.2 297.0,429.5 307.5,428.9 309.1,428.5 310.6,427.5 312.7,423.2 314.5,427.2 316.4,428.5 319.9,429.2 324.2,429.5 349.2,429.5 352.8,429.0 356.2,427.7 359.4,429.2 363.7,429.6 395.5,429.8 398.0,429.6 398.7,429.1 399.3,427.7 400.3,429.5 402.9,429.8 437.8,429.8 439.8,429.6 442.8,428.7 445.3,429.6 448.8,429.8 478.6,429.9 483.9,429.6 485.9,428.6 487.1,429.3 488.6,429.7 507.5,429.9"/>
<polyline stroke="#40c8d8" stroke-width="0.7" points="74.6,430.0 92.8,429.6 95.1,428.6 96.2,426.5 97.2,428.4 98.5,429.3 101.5,429.8 108.9,430.0 134.0,429.9 137.8,429.5 139.5,428.8 141.3,429.5 148.0,430.0 180.8,430.0 182.2,429.6 182.8,427.8 183.1,429.1 183.9,429.8 190.5,430.1 220.3,430.0 223.9,429.8 225.9,429.1 229.0,429.9 237.0,430.1 263.9,430.1 267.7,429.9 269.2,429.3 272.1,430.0 284.1,430.1 310.3,430.0 312.9,429.8 321.8,430.1 357.2,429.9 396.5,430.1 399.0,429.8 402.2,430.1 432.3,430.1 442.8,429.8 448.1,430.1 478.1,430.1 486.1,429.8 489.9,430.1 507.5,430.1"/>
<polyline stroke="#e8d050" stroke-width="0.7" points="74.6,427.4 82.1,426.3 86.5,424.6 88.0,423.6 89.8,421.7 91.0,419.9 93.0,413.7 94.3,403.4 95.0,390.7 96.2,333.3 97.4,388.4 98.0,400.9 99.0,410.8 100.5,417.5 102.6,421.7 104.5,423.5 106.9,425.0 111.9,426.4 120.4,427.1 126.0,426.6 130.8,425.2 132.3,424.3 134.0,422.7 135.8,419.6 137.0,415.4 139.5,396.1 141.2,410.4 142.3,416.3 143.8,420.8 145.3,423.0 146.7,424.4 149.3,425.8 151.8,426.7 159.2,427.8 174.1,428.5 178.1,428.2 179.6,427.6 180.9,426.5 181.3,425.6 182.1,421.2 182.8,385.7 183.2,413.1 183.8,423.4 184.6,426.1 186.1,427.7 190.0,428.7 201.0,429.1 212.3,428.8 216.4,428.5 219.9,427.8 221.9,426.8 223.4,425.3 224.3,423.3 226.1,416.5 228.3,424.3 229.4,426.0 230.5,426.9 234.5,428.4 242.3,429.1 260.2,429.3 265.6,428.7 267.7,427.3 268.6,425.4 269.4,421.9 270.5,426.0 271.3,427.6 272.8,428.6 274.7,429.1 280.1,429.4 295.0,429.6 306.5,429.2 309.5,428.5 310.5,427.8 311.5,426.6 312.7,423.9 314.2,427.0 315.9,428.4 319.1,429.2 324.9,429.6 351.1,429.6 356.2,428.8 359.4,429.6 364.2,429.8 395.0,429.8 396.7,429.7 398.3,429.2 399.3,426.6 400.0,428.9 400.6,429.4 402.0,429.7 435.8,429.7 440.2,429.3 442.2,428.2 443.0,428.2 445.3,429.4 452.4,429.8 481.6,429.9 484.1,429.6 485.6,428.9 488.9,429.8 507.5,429.9"/>
<polyline stroke="#e060b0" stroke-width="0.7" points="74.6,429.8 88.7,429.6 92.9,428.9 94.5,427.8 95.1,426.8 96.2,422.5 97.8,427.6 99.5,428.8 102.5,429.4 109.9,429.8 132.8,429.7 136.8,429.0 139.5,427.4 141.3,428.6 144.2,429.5 163.7,430.0 181.0,429.9 182.2,429.6 182.8,427.8 183.2,429.2 183.7,429.7 188.0,430.0 219.6,429.8 223.9,429.3 226.5,428.0 227.9,429.1 230.5,429.6 246.8,430.0 264.2,430.0 267.9,429.5 269.4,428.5 271.3,429.7 278.6,430.0 308.0,430.0 313.0,429.6 315.4,430.0 323.9,430.1 351.3,430.1 356.5,429.8 371.7,430.1 397.4,430.1 399.3,429.8 401.9,430.1 507.5,430.0"/>
<polyline stroke="#e0388f" stroke-width="0.7" points="74.6,428.8 84.6,427.7 88.5,426.5 91.0,424.7 93.0,421.5 94.1,417.2 94.9,410.8 96.2,379.1 97.5,409.3 98.2,416.0 99.0,419.9 100.0,422.6 102.3,425.4 105.0,426.9 110.4,428.1 123.0,428.7 129.3,428.4 132.8,427.7 134.9,426.8 136.8,424.9 139.5,417.2 141.2,422.6 142.8,425.6 144.2,426.9 147.2,428.0 153.1,428.9 159.7,429.2 173.6,429.5 179.6,429.2 181.0,428.6 182.1,426.8 182.8,413.9 183.1,423.1 183.8,427.5 185.1,428.9 188.0,429.4 209.9,429.3 219.2,428.5 221.8,427.6 223.2,426.3 224.4,424.5 226.1,419.0 227.9,424.6 228.7,426.0 229.8,427.0 233.4,428.5 240.3,429.3 253.2,429.6 264.7,429.4 267.7,428.4 269.4,424.8 270.5,427.5 271.7,428.8 275.3,429.5 282.6,429.8 301.2,429.8 308.0,429.4 310.6,428.7 311.8,427.7 312.4,426.5 313.0,426.6 314.4,428.5 316.0,429.2 324.4,429.8 348.7,429.9 351.8,429.7 356.5,429.0 358.7,429.6 362.3,429.9 396.0,430.0 398.5,429.7 399.2,428.8 400.3,429.8 402.0,429.9 434.4,430.0 439.8,429.8 442.6,429.1 445.3,429.8 451.2,430.0 482.6,429.9 484.2,429.7 485.6,429.1 488.0,429.8 491.1,430.0 507.5,429.9"/>
<polyline stroke="#3098e8" stroke-width="0.7" points="74.6,429.9 84.6,430.0 92.8,429.6 94.7,429.0 96.2,426.6 97.4,428.7 98.6,429.3 101.5,429.8 108.9,430.0 134.8,429.8 137.3,429.6 139.3,428.8 142.3,429.7 145.5,429.9 180.1,430.0 182.1,429.7 182.8,428.2 183.2,429.4 183.8,429.9 194.0,430.1 220.3,429.9 223.9,429.6 226.1,428.7 227.9,429.5 229.4,429.8 240.3,430.0 266.0,430.0 268.3,429.7 269.4,429.2 271.1,429.8 277.7,430.1 309.4,430.1 312.4,429.7 316.9,430.1 329.9,430.1 353.2,430.1 355.5,429.8 362.8,430.1 396.4,430.1 398.5,430.1 399.4,429.7 400.0,430.0 403.5,430.1 507.5,429.9"/>
<polyline stroke="#e0388f" stroke-width="0.7" points="74.6,429.4 84.6,429.0 88.5,428.4 91.0,427.5 93.0,426.0 94.1,423.9 94.9,421.0 96.2,405.9 97.5,420.2 98.8,424.9 100.0,426.6 101.7,427.6 104.0,428.3 108.9,428.9 123.0,429.0 129.3,428.4 132.8,427.6 134.9,426.5 136.8,424.3 137.8,421.9 139.5,415.8 141.2,421.8 142.8,425.1 144.2,426.5 147.2,427.9 153.1,428.8 163.2,429.3 174.6,429.5 179.6,429.0 181.0,428.2 182.1,425.7 182.8,408.1 183.1,420.6 183.8,426.6 184.3,427.8 185.1,428.5 188.0,429.3 206.5,429.6 219.2,428.9 221.8,428.3 223.2,427.4 224.4,426.0 226.1,422.1 227.9,426.1 229.8,427.9 233.4,429.0 240.3,429.5 253.2,429.7 264.7,429.5 267.7,428.5 269.4,425.1 270.5,427.7 271.7,428.9 275.3,429.6 282.6,429.8 308.1,429.8 311.2,429.5 313.0,428.8 315.1,429.7 324.4,430.0 348.7,429.9 356.5,429.2 358.7,429.7 362.3,429.9 396.0,430.0 398.5,429.8 399.2,429.2 400.3,429.9 402.0,430.0 434.4,430.0 439.8,429.9 442.6,429.4 445.3,429.9 448.9,430.0 474.9,430.0 482.6,429.9 484.2,429.7 485.6,429.1 488.0,429.8 491.1,430.0 507.5,430.0"/>
<polyline stroke="#3098e8" stroke-width="0.7" points="74.6,427.0 78.6,426.6 83.6,425.4 87.0,423.7 89.1,422.0 90.8,419.5 92.8,413.9 93.9,406.1 94.9,391.0 96.2,326.8 97.4,385.8 98.0,398.8 99.0,409.4 100.1,415.4 102.0,419.9 104.5,422.8 108.9,424.9 112.4,425.5 116.9,425.6 121.9,425.0 124.9,424.3 129.4,422.1 131.8,419.7 133.2,417.6 135.3,411.7 136.8,403.2 137.8,392.2 139.5,363.8 142.1,401.5 143.3,409.5 144.6,414.7 146.3,418.3 148.0,420.7 150.2,422.6 154.8,424.7 162.2,426.4 169.1,427.1 176.1,427.3 179.1,426.8 180.1,426.1 180.9,424.8 181.8,420.7 182.3,413.2 182.8,369.3 183.2,407.1 183.8,420.9 184.6,424.4 185.6,426.1 187.6,427.2 189.5,427.6 200.5,428.0 209.9,427.4 215.9,426.2 219.9,423.9 222.4,420.2 223.9,414.7 226.1,393.3 227.9,411.3 228.7,416.2 229.8,420.0 231.2,422.7 233.4,424.8 235.9,426.1 241.3,427.4 249.3,428.2 257.2,428.4 261.6,428.1 265.2,426.9 266.9,425.1 267.7,423.2 268.3,419.8 269.4,409.3 270.5,419.8 271.1,423.1 272.0,425.1 273.2,426.7 275.1,427.7 281.6,428.7 300.9,429.2 307.2,428.9 309.4,428.5 310.5,427.8 311.2,427.1 312.7,424.2 314.4,427.4 315.4,428.2 318.5,429.0 323.9,429.3 339.3,429.4 349.7,429.1 353.2,428.1 355.7,425.8 356.5,425.9 357.7,427.4 358.9,428.2 362.8,429.1 371.0,429.5 395.8,429.5 397.3,429.3 398.3,428.7 399.3,424.7 399.7,427.4 400.4,428.8 401.3,429.3 403.5,429.6 436.3,429.7 440.3,429.3 442.3,428.2 444.8,429.2 447.7,429.6 478.2,429.8 482.9,429.5 484.8,429.0 485.9,428.2 488.3,429.5 490.8,429.7 507.5,429.6"/>
<polyline stroke="#e060b0" stroke-width="0.7" points="74.6,428.6 84.6,427.6 88.7,426.3 91.2,424.4 92.9,421.5 94.1,417.0 95.0,409.0 96.2,378.2 97.5,409.0 98.2,415.8 99.2,420.3 100.5,423.4 102.5,425.5 105.5,426.9 109.9,427.9 114.9,428.4 122.4,428.5 126.8,428.2 132.8,426.9 134.9,425.7 136.8,423.0 139.5,412.6 141.3,420.1 142.3,422.9 144.2,425.7 146.3,427.0 151.0,428.2 158.2,428.9 173.6,429.3 179.1,429.0 181.0,428.1 181.7,427.0 182.1,425.0 182.8,406.4 183.2,421.1 183.7,426.1 184.9,428.3 188.5,429.3 211.6,429.4 219.6,428.7 222.5,427.7 223.9,426.4 226.1,421.4 228.4,426.4 230.5,428.1 236.3,429.2 246.8,429.6 260.9,429.6 264.2,429.4 266.4,428.8 268.1,427.5 269.4,423.9 270.6,427.4 271.7,428.6 274.1,429.3 278.6,429.6 308.0,429.6 310.9,429.0 312.7,427.5 314.2,428.8 315.4,429.3 323.9,429.8 350.3,429.7 354.0,429.3 355.7,428.6 359.9,429.6 364.7,429.8 395.8,429.9 398.3,429.6 399.3,427.9 400.0,429.4 402.8,429.9 436.8,429.8 440.2,429.5 442.6,428.6 445.3,429.6 450.8,429.9 479.1,429.9 483.4,429.6 485.0,429.0 485.6,428.4 487.6,429.4 490.1,429.8 507.5,429.9"/>
<polyline stroke="#e0388f" stroke-width="0.7" points="74.6,429.0 84.6,428.2 88.5,427.2 91.0,425.8 93.0,423.3 94.1,419.8 94.9,414.7 96.2,389.5 97.4,412.5 98.8,421.4 100.0,424.1 101.7,425.9 104.0,427.1 108.9,428.2 114.4,428.6 123.0,428.4 129.3,427.6 132.8,426.5 134.9,425.0 136.8,421.9 137.8,418.4 139.5,409.6 141.8,420.4 142.8,423.0 144.2,425.0 147.2,426.9 149.7,427.7 159.7,428.8 176.6,429.3 179.6,429.0 181.0,428.4 181.9,427.2 182.3,424.4 182.8,411.6 183.1,422.1 183.8,427.1 184.3,428.1 185.1,428.7 188.0,429.3 209.9,429.3 219.2,428.4 221.8,427.5 223.2,426.3 224.4,424.4 226.1,418.8 227.9,424.5 228.7,425.9 229.8,427.0 233.4,428.5 240.3,429.2 254.7,429.5 264.7,429.1 266.9,428.4 267.7,427.7 269.4,422.6 270.5,426.4 271.7,428.2 275.3,429.3 282.6,429.7 308.0,429.5 309.7,429.2 311.2,428.5 312.4,426.9 313.0,427.0 314.4,428.7 316.0,429.3 324.4,429.8 348.7,429.9 356.5,429.3 358.7,429.7 362.3,429.9 396.0,429.9 398.5,429.5 399.2,428.2 400.4,429.7 405.5,430.0 434.4,429.9 439.8,429.7 442.6,428.9 445.3,429.7 448.9,429.9 479.0,429.9 484.2,429.4 485.6,428.3 486.1,428.3 488.0,429.5 491.1,429.8 507.5,429.9"/>
<polyline stroke="#e060b0" stroke-width="0.7" points="74.6,428.6 84.6,427.6 88.7,426.3 91.2,424.3 92.9,421.4 94.1,416.7 95.0,408.6 96.2,377.3 97.5,408.6 98.2,415.6 99.2,420.2 100.5,423.2 102.5,425.4 105.5,426.8 109.9,427.9 114.9,428.3 122.4,428.4 126.8,428.2 132.8,426.8 134.9,425.5 136.8,422.7 139.5,411.8 141.3,419.7 142.3,422.6 143.8,425.0 146.3,426.8 151.0,428.1 158.2,428.8 173.6,429.3 179.1,428.9 181.0,427.9 181.7,426.7 182.1,424.5 182.8,404.2 183.2,420.3 183.7,425.8 184.3,427.4 184.9,428.1 187.1,429.0 188.5,429.2 211.6,429.3 219.6,428.7 222.5,427.6 223.9,426.3 226.1,421.0 228.4,426.3 230.5,428.0 234.3,428.9 244.8,429.5 257.2,429.6 265.2,428.8 267.1,428.0 267.9,426.9 269.4,421.6 270.6,426.4 272.2,428.3 274.9,429.2 281.6,429.6 308.0,429.6 310.9,429.1 312.7,427.7 314.2,429.0 315.4,429.4 323.9,429.8 351.3,429.8 356.5,429.2 358.2,429.7 361.7,429.9 395.8,430.0 398.3,429.8 399.3,428.7 400.0,429.7 402.8,430.0 436.8,429.8 440.2,429.5 442.6,428.7 445.3,429.6 452.0,429.9 479.1,430.0 483.4,429.9 485.6,429.3 490.1,430.0 507.5,429.9"/>
<polyline stroke="#e060b0" stroke-width="0.7" points="74.6,429.8 88.7,429.6 92.9,429.0 94.5,428.0 95.1,427.2 96.2,423.4 97.8,427.9 99.5,429.0 102.5,429.5 109.9,429.8 132.8,429.5 136.8,428.6 139.5,426.4 141.3,428.0 143.3,429.0 148.0,429.6 179.1,429.8 181.0,429.6 182.1,428.8 182.8,423.9 183.2,427.8 183.7,429.1 184.9,429.6 188.5,429.9 219.6,429.7 223.9,429.0 225.8,427.4 226.5,427.3 227.9,428.7 230.5,429.5 246.8,430.0 267.1,429.8 268.7,429.4 269.4,428.8 271.3,429.8 278.6,430.0 308.0,430.0 310.9,429.8 313.0,429.3 315.4,429.9 323.9,430.1 351.3,430.0 356.5,429.7 359.9,430.0 371.7,430.1 397.4,430.1 399.3,429.7 401.9,430.1 438.6,430.1 443.4,429.8 445.3,430.1 479.1,430.1 484.2,430.0 485.6,429.7 490.1,430.1 507.5,430.0"/>
<polyline stroke="#7070e8" stroke-width="0.7" points="74.6,429.8 88.0,429.2 91.0,428.7 92.8,428.0 94.0,427.0 94.9,425.1 96.2,416.9 97.5,424.8 98.0,426.2 99.0,427.5 100.5,428.4 102.1,428.9 110.9,429.6 124.7,429.8 133.6,429.4 137.0,428.5 139.5,426.4 142.5,428.8 145.8,429.4 160.7,429.9 179.1,429.9 182.0,429.3 182.5,428.2 182.8,425.5 183.2,428.4 183.8,429.4 184.8,429.8 189.5,430.0 209.4,429.9 221.0,429.5 223.9,428.9 225.8,427.2 226.4,427.2 227.9,428.7 229.3,429.2 233.3,429.7 240.3,429.9 265.2,429.8 267.9,429.4 269.2,428.1 271.3,429.5 277.7,430.0 307.5,430.0 310.6,429.9 313.0,429.4 314.5,429.9 321.2,430.1 356.2,429.8 395.5,430.1 398.0,430.0 399.4,429.5 400.1,430.0 401.4,430.1 437.8,430.1 442.8,429.8 448.8,430.1 483.9,430.1 485.1,429.8 488.3,430.1 507.5,430.1"/>
<polyline stroke="#c050e0" stroke-width="0.7" points="74.6,428.8 81.6,428.2 85.5,427.5 88.5,426.5 91.2,424.6 93.0,421.6 94.0,418.0 94.9,411.0 96.2,379.7 97.4,408.5 98.0,414.8 99.0,420.1 100.1,423.0 102.3,425.5 105.5,427.1 110.4,428.1 124.3,428.8 132.3,428.1 135.8,426.5 137.0,425.2 139.5,418.6 141.3,423.6 142.5,425.8 144.6,427.4 146.3,428.0 151.2,428.8 158.2,429.3 170.6,429.5 179.1,429.2 181.1,428.4 182.0,426.6 182.5,421.9 182.8,411.1 183.6,426.3 184.1,427.8 184.8,428.6 187.1,429.3 208.5,429.5 219.4,428.8 221.8,428.2 223.9,426.6 226.1,421.8 227.9,425.9 229.3,427.6 233.4,428.9 239.2,429.4 265.0,429.6 267.7,429.0 268.6,428.3 269.4,427.0 270.6,428.8 271.3,429.2 274.1,429.7 280.6,429.8 307.2,429.8 310.6,429.6 312.4,428.6 313.0,428.6 313.9,429.3 315.4,429.6 323.4,429.9 352.3,429.9 356.0,429.4 361.3,429.9 395.9,430.0 398.3,429.8 399.3,429.0 399.8,429.7 400.7,429.9 403.5,430.0 435.1,430.0 440.6,429.7 442.3,429.2 444.9,429.8 453.6,430.0 482.6,430.0 486.1,429.4 487.5,429.8 491.6,430.0 507.5,429.9"/>
<polyline stroke="#3098e8" stroke-width="0.7" points="74.6,429.4 87.0,428.9 90.8,428.0 92.8,426.9 93.9,425.3 94.7,423.2 96.2,409.4 97.4,421.2 98.0,423.8 99.0,426.0 99.9,427.1 101.5,428.0 104.5,428.7 109.9,429.3 125.4,429.5 133.2,429.0 134.8,428.7 136.8,427.8 137.8,426.8 139.3,424.3 140.0,424.5 141.2,426.8 142.3,427.8 144.3,428.7 146.3,429.1 158.2,429.7 180.1,429.7 181.6,429.3 182.1,428.9 182.8,424.1 183.2,427.9 183.8,429.2 184.9,429.6 192.0,429.9 211.9,429.8 220.3,429.4 223.9,428.4 226.1,425.8 227.9,428.0 229.8,429.0 233.4,429.5 240.3,429.8 258.2,429.9 266.0,429.6 268.3,428.7 269.4,427.1 270.5,428.7 272.0,429.4 274.1,429.7 281.6,429.9 309.4,430.0 312.4,429.4 315.4,429.9 318.5,430.0 349.7,430.0 355.5,429.6 362.8,430.0 395.8,430.1 398.5,429.9 399.4,429.2 400.0,429.9 403.5,430.1 436.3,430.0 440.3,429.9 442.3,429.5 445.7,430.0 454.8,430.1 480.9,430.0 485.6,429.5 490.8,430.0 507.5,429.9"/>
<polyline stroke="#3098e8" stroke-width="0.7" points="74.6,425.8 78.6,425.0 81.6,424.0 84.6,422.6 87.0,420.6 89.1,418.0 90.8,414.2 92.8,405.6 93.9,393.8 94.9,370.8 96.2,273.1 97.4,362.9 98.0,382.6 99.0,399.0 100.1,407.9 102.3,415.6 105.0,419.9 106.9,421.6 109.9,423.3 113.4,424.2 116.9,424.6 121.9,424.5 124.9,423.9 127.3,423.1 129.4,421.9 131.8,419.7 133.2,417.7 135.3,411.9 136.8,403.6 137.8,392.8 139.5,364.8 142.1,401.9 143.3,409.7 144.6,414.8 146.3,418.4 148.0,420.7 150.2,422.6 154.8,424.7 162.2,426.4 174.6,427.5 179.1,427.5 180.9,426.8 181.8,424.9 182.3,421.2 182.8,398.7 183.2,418.1 183.8,425.0 185.1,427.2 189.5,428.0 200.5,428.4 211.9,428.2 217.0,427.6 220.3,426.6 222.9,424.3 223.9,422.2 226.1,411.2 227.9,420.5 228.7,422.9 229.8,424.8 231.2,426.2 233.4,427.3 240.8,428.4 258.2,428.8 261.6,428.6 265.2,427.7 266.9,426.4 267.7,424.9 268.3,422.4 269.4,414.5 270.5,422.4 271.1,424.8 272.0,426.3 273.2,427.5 275.1,428.3 281.6,429.0 300.9,429.1 307.2,428.4 309.4,427.5 310.6,426.3 312.7,420.2 314.4,425.6 315.4,427.0 316.4,427.8 319.4,428.7 325.9,429.2 339.3,429.4 349.7,429.1 353.2,428.2 355.7,426.1 356.5,426.2 357.7,427.6 358.9,428.3 362.8,429.2 371.0,429.5 395.8,429.6 398.3,428.9 399.3,425.7 399.7,427.9 400.4,429.0 401.3,429.4 403.5,429.6 436.3,429.6 440.3,429.1 442.3,427.8 444.8,429.1 447.7,429.5 478.2,429.7 482.9,429.3 484.8,428.4 485.9,427.2 487.2,428.6 488.3,429.2 490.8,429.6 507.5,429.6"/>
<polyline stroke="#5090e8" stroke-width="0.7" points="74.6,426.0 78.6,425.3 82.6,423.9 85.5,422.1 87.5,420.3 89.1,418.3 90.8,414.6 92.2,409.5 92.9,404.8 94.1,391.7 95.0,368.1 96.2,277.5 97.4,364.6 98.0,384.0 98.8,397.4 99.9,407.4 101.9,415.0 103.2,418.0 104.5,419.7 107.4,422.4 108.9,423.2 112.9,424.6 115.4,425.0 118.4,425.3 123.4,425.2 126.8,424.5 129.3,423.6 131.9,421.7 133.3,420.0 135.3,415.9 137.0,408.0 139.5,378.7 141.7,404.5 142.8,412.0 144.3,417.2 145.8,420.2 147.6,422.3 149.2,423.5 153.1,425.3 159.7,426.7 170.1,427.8 176.1,427.9 179.1,427.7 180.8,426.7 181.7,424.6 182.2,420.2 182.8,391.4 183.2,415.4 183.7,423.1 184.1,425.2 184.8,426.7 186.1,427.6 188.0,428.1 194.5,428.6 208.0,428.7 214.4,428.5 219.4,427.8 221.4,427.1 223.4,425.3 224.4,423.2 226.1,416.6 227.9,423.1 228.7,425.0 229.8,426.4 231.8,427.6 233.4,428.0 240.3,428.8 257.7,429.1 265.2,428.5 266.6,427.8 267.9,426.1 269.4,420.1 270.7,425.8 271.6,427.4 273.4,428.5 277.7,429.1 299.5,429.4 307.2,429.0 309.5,428.5 310.6,427.8 312.7,424.3 314.8,427.9 316.9,428.9 320.6,429.3 350.8,429.5 353.2,429.2 356.2,428.2 358.9,429.3 363.2,429.5 395.7,429.5 397.7,429.1 398.4,428.4 399.3,424.1 400.3,428.6 401.0,429.1 403.0,429.6 436.8,429.5 440.2,428.9 442.3,427.3 445.3,429.0 448.8,429.5 477.6,429.7 482.0,429.4 483.4,429.0 484.5,428.4 485.9,426.9 488.0,429.0 490.6,429.5 507.5,429.8"/>
<polyline stroke="#e0388f" stroke-width="0.7" points="74.6,430.0 92.5,429.6 94.9,428.8 96.2,426.7 97.2,428.4 98.6,429.3 101.7,429.8 108.9,430.0 132.8,429.9 136.8,429.6 139.5,428.7 141.8,429.5 147.2,429.9 180.7,430.0 182.1,429.8 182.9,428.4 183.1,429.4 183.6,429.8 188.0,430.1 219.2,430.0 224.4,429.7 225.8,429.2 228.7,429.8 240.3,430.1 264.7,430.1 269.2,429.7 275.3,430.1 309.7,430.1 313.0,429.8 314.4,430.1 324.4,430.1 355.0,429.9 396.0,430.1 399.2,429.8 400.4,430.1 408.5,430.1 507.5,430.0"/>
<polyline stroke="#c8b868" stroke-width="0.7" points="74.6,429.0 84.1,428.3 87.5,427.5 90.2,426.4 91.5,425.4 92.8,423.8 94.0,420.5 94.9,415.0 96.2,390.2 97.5,413.8 98.0,418.0 99.2,422.6 100.5,425.0 103.0,426.8 105.9,427.8 110.9,428.5 123.4,428.6 127.7,428.3 132.8,427.0 135.3,425.5 136.8,423.3 137.8,420.3 139.5,413.2 142.3,423.2 143.8,425.5 145.1,426.5 147.2,427.5 151.0,428.3 154.8,428.7 163.7,429.2 175.1,429.2 179.6,428.5 181.3,427.0 182.1,423.6 182.8,399.6 183.2,418.5 183.8,425.5 184.4,427.1 185.1,428.0 186.1,428.5 189.0,429.2 202.5,429.4 212.4,429.0 217.4,428.5 220.4,427.7 222.8,426.0 223.9,424.3 226.1,416.5 227.9,423.3 228.7,425.0 230.3,426.9 234.3,428.4 242.8,429.2 259.7,429.6 265.6,429.3 267.7,428.6 269.4,425.8 270.7,428.2 272.4,429.2 281.6,429.7 308.0,429.7 310.9,429.2 312.7,428.1 314.9,429.4 318.9,429.8 349.2,429.9 353.1,429.6 356.0,429.0 358.4,429.6 362.8,429.9 396.0,429.9 398.3,429.5 399.3,427.5 400.1,429.4 402.2,429.9 436.7,429.9 442.8,429.2 444.5,429.7 449.8,430.0 479.3,430.0 484.1,429.6 485.9,428.8 486.9,429.4 490.2,429.9 507.5,430.0"/>
<polyline stroke="#40c8d8" stroke-width="0.7" points="74.6,430.0 92.8,429.6 95.1,428.7 96.2,426.6 97.2,428.4 98.5,429.3 101.5,429.8 108.9,430.0 134.0,429.8 137.8,429.1 139.5,428.2 141.3,429.2 143.4,429.6 158.2,430.0 181.6,430.0 182.3,429.7 182.8,428.7 183.6,429.9 190.5,430.1 220.3,430.0 223.9,429.7 225.9,429.1 229.0,429.8 237.0,430.0 263.9,430.1 267.7,429.9 269.2,429.4 272.1,430.0 284.1,430.1 306.6,430.1 312.9,429.8 321.8,430.1 357.2,429.9 396.5,430.1 399.3,429.8 402.2,430.1 442.8,429.9 478.1,430.1 486.1,429.8 489.9,430.1 507.5,430.1"/>
<polyline stroke="#d848c8" stroke-width="0.7" points="74.6,429.6 88.0,429.2 91.4,428.6 93.0,427.9 94.3,426.4 95.1,424.3 96.2,416.5 97.4,424.3 98.0,426.0 99.0,427.3 101.0,428.5 103.4,429.1 109.4,429.5 126.0,429.7 133.6,429.2 137.0,428.2 139.5,425.6 141.2,427.5 142.8,428.6 148.7,429.5 164.2,429.9 181.0,429.6 182.2,428.7 182.8,424.5 183.6,429.0 184.8,429.7 188.0,429.9 211.9,429.8 220.9,429.2 223.9,428.1 226.1,425.4 228.3,428.1 230.1,428.9 234.1,429.5 242.3,429.8 265.0,429.8 267.7,429.4 269.4,427.8 271.3,429.5 277.7,429.9 306.6,430.0 310.0,429.9 312.9,429.3 314.4,429.8 317.9,430.0 350.7,430.0 356.2,429.4 362.3,430.0 395.5,430.0 398.4,429.9 399.2,429.1 400.3,429.9 405.0,430.1 436.3,430.1 442.6,429.6 448.9,430.1 482.3,430.1 485.9,429.7 489.1,430.0 507.5,430.0"/>
<polyline stroke="#d848c8" stroke-width="0.7" points="74.6,428.5 83.6,427.6 88.0,426.3 91.4,423.7 93.0,420.6 94.3,414.6 95.0,407.0 96.2,373.5 97.4,405.9 98.0,413.0 99.0,418.7 100.5,422.7 102.5,425.1 105.0,426.5 109.9,427.8 115.9,428.4 126.0,428.5 131.1,428.0 133.6,427.3 135.7,425.9 137.0,424.3 139.5,416.5 141.2,422.3 142.3,424.6 144.2,426.6 146.3,427.6 148.7,428.3 153.1,428.8 161.2,429.2 174.1,429.3 179.6,428.9 181.2,428.1 182.1,425.7 182.8,409.6 183.2,422.4 183.9,427.2 184.6,428.3 185.6,428.9 189.5,429.4 211.9,429.2 218.5,428.6 220.9,427.9 222.9,426.6 223.9,425.3 226.1,418.8 228.3,425.3 230.1,427.3 234.1,428.7 242.3,429.4 254.7,429.6 265.0,429.4 267.7,428.4 269.4,425.0 270.7,428.0 271.3,428.6 273.1,429.3 277.7,429.7 306.6,429.6 310.0,429.0 311.0,428.5 312.7,426.5 314.4,428.5 316.4,429.3 326.9,429.8 350.7,429.7 353.1,429.4 356.2,428.4 358.9,429.4 370.5,429.9 397.2,429.9 398.5,429.7 399.3,428.9 399.9,429.7 401.6,429.9 436.3,430.0 440.3,429.8 442.6,429.3 446.5,429.9 478.1,430.0 483.1,429.8 485.9,428.7 487.5,429.6 489.1,429.8 507.5,429.9"/>
<polyline stroke="#d848c8" stroke-width="0.7" points="74.6,429.5 83.6,429.3 88.0,428.9 91.4,428.0 93.0,427.0 94.3,425.0 95.1,422.2 96.2,411.4 97.4,422.2 98.0,424.5 99.0,426.3 99.9,427.3 102.1,428.3 109.4,429.3 126.0,429.6 133.6,429.1 137.0,428.0 139.5,425.1 141.2,427.2 142.8,428.4 145.3,429.1 148.7,429.5 164.2,429.8 179.6,429.5 181.2,429.2 182.1,428.0 182.8,420.0 183.2,426.3 183.9,428.7 185.6,429.5 189.5,429.9 220.9,429.7 223.9,429.2 225.9,427.9 228.3,429.2 231.8,429.7 262.4,429.8 267.7,429.2 269.4,427.1 270.7,428.9 271.3,429.3 277.7,429.9 306.6,430.0 310.0,429.9 312.9,429.3 313.9,429.7 316.4,430.0 326.9,430.1 350.7,430.0 356.2,429.5 358.9,429.9 367.1,430.1 397.2,430.1 399.2,429.6 401.3,430.1 436.3,430.1 442.6,429.7 446.5,430.1 478.1,430.1 483.1,430.0 485.9,429.4 489.1,430.0 507.5,430.0"/>
<polyline stroke="#58d868" stroke-width="0.7" points="74.6,426.2 79.1,425.4 84.1,423.6 88.0,420.4 89.5,418.4 91.0,414.9 92.8,407.4 94.0,395.5 94.9,375.5 96.2,285.5 97.5,371.4 98.2,390.6 99.2,403.2 100.5,411.4 102.6,417.6 103.8,419.5 106.4,422.2 110.9,424.5 115.9,425.7 118.9,426.1 125.9,426.2 129.8,425.5 133.6,423.3 135.7,420.1 136.8,416.8 137.8,411.5 139.5,397.5 141.2,411.1 142.5,417.7 144.3,421.9 146.3,424.2 148.7,425.6 151.2,426.5 159.7,427.8 174.1,428.3 178.6,427.8 179.6,427.3 180.6,426.5 181.3,424.9 182.2,418.5 182.8,380.3 183.2,411.2 183.7,421.2 184.2,424.3 184.9,426.2 186.1,427.4 188.5,428.3 203.5,428.8 213.4,428.3 218.8,427.2 221.9,425.4 223.4,423.1 224.4,420.0 226.1,410.5 227.9,420.1 229.3,424.1 230.3,425.3 231.9,426.6 233.8,427.4 236.8,428.1 241.8,428.6 255.7,429.1 262.2,428.8 265.0,428.3 266.7,427.3 267.7,425.9 268.3,424.0 269.4,417.9 270.7,424.8 272.2,427.4 273.6,428.2 275.3,428.7 281.1,429.2 301.5,429.3 307.8,428.6 310.6,426.9 312.7,421.7 314.2,425.8 315.4,427.5 317.5,428.5 319.9,429.0 324.5,429.3 338.8,429.6 349.3,429.3 352.8,428.7 354.0,428.2 356.0,426.8 358.9,428.7 363.2,429.4 395.5,429.7 397.5,429.4 398.4,428.8 399.3,425.7 399.7,427.9 400.4,429.0 401.5,429.5 403.5,429.7 437.3,429.6 440.3,429.1 442.8,427.9 444.3,429.0 448.1,429.6 477.9,429.7 483.4,429.1 485.9,427.1 487.8,428.9 489.7,429.5 507.5,429.8"/>
<polyline stroke="#58d868" stroke-width="0.7" points="74.6,429.8 84.1,429.9 92.5,429.4 94.7,428.6 96.2,425.5 97.6,428.3 98.8,429.2 101.5,429.7 107.4,429.9 133.6,429.7 136.8,429.4 139.5,428.2 142.5,429.4 145.3,429.7 178.6,430.0 181.9,429.8 182.5,429.2 182.9,427.9 183.2,429.2 184.2,429.9 188.5,430.0 218.8,430.0 223.4,429.9 226.5,429.4 227.9,429.8 236.8,430.1 264.3,430.1 267.7,430.0 269.0,429.6 270.7,429.9 276.6,430.1 307.8,430.1 312.4,429.8 319.9,430.1 355.0,429.9 367.2,430.1 396.1,430.1 399.1,429.9 403.5,430.1 507.5,430.0"/>
<polyline stroke="#b858d8" stroke-width="0.7" points="74.6,429.0 84.6,428.4 88.7,427.4 91.4,425.9 93.0,423.8 94.1,420.8 95.0,415.1 96.2,393.1 97.5,415.0 98.2,419.9 99.2,423.2 100.5,425.3 102.6,426.9 106.9,428.2 111.9,428.7 126.0,428.8 130.6,428.2 134.0,427.2 136.1,425.6 137.0,424.4 139.5,416.6 141.7,423.5 142.8,425.4 144.8,427.1 146.8,427.9 150.6,428.6 165.2,429.4 181.1,429.4 181.9,429.0 182.3,428.1 182.8,423.1 183.2,427.7 184.1,429.2 185.1,429.5 192.0,429.7 219.9,429.4 222.4,429.1 223.9,428.5 225.8,426.4 226.4,426.3 228.4,428.5 231.2,429.3 246.3,429.9 265.4,429.8 267.9,429.4 269.4,428.1 271.1,429.4 272.6,429.7 283.1,429.9 309.0,429.9 311.2,429.6 312.9,429.0 313.9,429.5 315.7,429.8 327.9,430.0 349.8,430.0 354.0,429.8 356.0,429.4 359.4,429.9 365.7,430.0 397.0,430.0 398.5,429.9 399.3,429.4 399.8,429.9 402.3,430.0 433.9,430.0 440.2,429.8 442.8,429.3 445.7,429.9 452.8,430.0 480.6,430.0 485.0,429.9 485.6,429.5 490.5,430.0 507.5,429.9"/>
<polyline stroke="#e0388f" stroke-width="0.7" points="74.6,428.1 84.6,426.5 88.5,424.6 91.0,422.0 92.9,417.5 94.1,410.8 94.9,401.3 96.2,353.9 97.5,399.0 98.2,409.1 99.0,414.9 100.0,418.9 102.3,423.0 105.0,425.1 110.4,426.8 118.9,427.3 124.9,426.9 129.8,425.7 132.8,423.9 134.9,421.4 136.8,416.1 137.8,410.4 139.5,395.6 141.2,410.1 142.8,418.0 144.6,422.1 147.2,424.7 149.7,426.0 153.1,427.0 159.7,427.9 173.6,428.6 176.6,428.5 179.6,427.7 180.7,426.8 181.2,425.9 182.1,421.4 182.8,386.6 183.2,413.5 183.8,423.2 184.3,425.6 185.1,427.0 188.0,428.5 196.0,429.0 206.5,429.0 214.9,428.4 219.2,427.6 221.8,426.3 223.2,424.5 224.4,421.6 226.1,413.4 227.9,421.8 228.7,423.8 229.8,425.5 231.8,427.1 233.4,427.7 240.3,428.8 254.7,429.3 264.7,428.8 266.9,428.0 267.7,427.1 268.6,424.8 269.4,421.0 270.5,425.6 271.7,427.8 275.3,429.1 280.6,429.4 299.5,429.6 308.0,429.2 310.6,428.3 312.7,425.5 314.4,428.0 316.0,428.9 318.4,429.3 324.4,429.6 348.7,429.5 353.2,428.8 355.7,427.4 356.5,427.5 358.7,428.9 360.8,429.3 369.1,429.7 396.0,429.8 398.5,429.4 399.2,427.9 400.3,429.5 402.0,429.8 434.4,429.7 439.8,429.3 442.6,427.7 445.3,429.2 448.9,429.7 474.9,429.9 482.6,429.6 484.2,429.1 485.9,427.7 488.0,429.3 490.2,429.7 507.5,429.8"/>
<polyline stroke="#d848c8" stroke-width="0.7" points="74.6,428.7 83.6,428.0 88.0,426.9 91.4,424.7 93.0,422.1 94.3,417.1 95.1,409.8 96.2,382.6 97.4,409.8 98.0,415.8 99.0,420.6 99.9,423.0 102.1,425.6 105.0,427.0 109.4,428.0 118.9,428.5 126.0,428.3 131.1,427.5 133.6,426.5 135.7,424.6 137.0,422.4 139.5,412.0 141.7,421.1 142.8,423.8 144.6,425.9 146.7,427.0 149.7,427.9 154.2,428.6 161.2,429.0 176.6,429.3 179.6,429.1 181.2,428.6 181.9,427.8 182.2,426.5 182.8,415.8 183.2,424.7 183.6,427.4 184.1,428.3 184.8,428.9 188.0,429.4 211.9,429.4 220.9,428.6 222.9,427.7 223.9,426.8 226.1,422.4 228.3,426.8 230.1,428.2 234.1,429.1 242.3,429.6 257.2,429.6 265.0,429.2 266.6,428.7 267.7,428.0 269.4,423.7 270.5,426.9 271.3,428.2 273.1,429.1 277.7,429.6 290.6,429.8 306.6,429.5 310.0,429.0 311.0,428.4 312.7,426.3 314.4,428.5 316.4,429.3 326.9,429.8 350.7,429.9 356.2,429.2 358.9,429.8 362.3,429.9 395.5,429.9 398.4,429.6 399.3,428.2 400.3,429.6 405.0,430.0 436.3,429.9 440.3,429.5 442.6,428.6 444.5,429.4 448.9,429.9 478.1,429.9 483.1,429.6 484.1,429.4 485.9,428.3 487.5,429.4 489.9,429.8 507.5,429.9"/>
<polyline stroke="#3098e8" stroke-width="0.7" points="74.6,426.3 78.6,425.7 81.6,424.7 84.6,423.5 87.0,421.7 89.1,419.3 90.8,415.9 92.8,408.2 93.9,397.7 94.9,377.1 96.2,289.8 97.4,370.0 98.0,387.7 99.0,402.3 100.1,410.3 102.3,417.2 105.0,421.2 106.9,422.7 109.9,424.4 115.9,425.9 124.9,426.5 129.4,426.0 131.8,425.2 133.2,424.4 134.8,422.8 136.8,418.5 137.8,413.9 139.5,401.8 141.2,413.6 142.3,418.6 144.3,422.9 146.3,424.9 150.2,426.6 158.2,427.9 174.6,428.5 178.1,428.3 180.1,427.7 180.9,426.9 181.6,425.2 182.2,421.1 182.8,392.0 183.2,415.7 183.8,424.3 185.1,427.3 186.6,428.0 189.5,428.6 200.5,428.9 209.9,428.8 217.0,428.1 220.3,427.2 222.9,425.1 223.9,423.3 226.1,413.7 227.9,421.8 229.8,425.6 231.2,426.8 233.4,427.7 240.8,428.8 258.2,429.0 261.6,428.7 265.2,427.7 266.9,426.3 267.7,424.8 268.3,422.1 269.4,413.9 270.5,422.1 271.1,424.7 272.0,426.3 273.2,427.5 275.1,428.3 281.6,429.1 300.9,429.3 307.2,428.8 309.4,428.2 310.5,427.3 311.2,426.4 312.7,422.6 314.4,426.7 316.4,428.3 319.4,429.0 325.9,429.5 349.7,429.6 353.2,429.4 355.5,428.5 356.5,428.5 358.9,429.4 362.8,429.6 395.8,429.8 398.3,429.4 399.3,427.4 400.0,429.2 400.8,429.6 403.5,429.8 436.3,429.7 440.3,429.4 442.3,428.4 444.8,429.3 447.7,429.7 478.2,429.8 482.9,429.6 484.8,429.1 485.6,428.3 488.3,429.6 490.8,429.8 507.5,429.7"/>
<polyline stroke="#58d868" stroke-width="0.7" points="74.6,428.7 84.1,427.9 88.0,426.8 91.0,425.1 92.5,423.0 93.9,419.0 94.9,411.8 96.2,381.9 97.5,410.5 98.2,416.9 99.2,421.1 100.5,423.9 102.6,425.9 106.4,427.4 110.9,428.2 118.9,428.7 125.9,428.6 129.8,428.2 133.6,427.1 135.7,425.7 136.8,424.2 137.8,421.8 139.5,415.5 141.8,423.1 142.8,425.0 144.3,426.5 146.3,427.5 149.7,428.3 159.7,429.2 174.1,429.5 180.9,429.1 181.9,428.3 182.2,427.4 182.8,418.7 183.2,425.7 183.7,428.0 184.6,429.0 188.5,429.5 210.9,429.4 218.8,428.8 221.9,427.9 223.4,426.9 224.4,425.4 226.1,421.0 227.9,425.5 229.3,427.3 230.8,428.2 233.8,428.9 241.8,429.5 264.3,429.7 267.7,429.2 269.4,427.4 270.7,428.9 271.3,429.2 276.6,429.8 307.8,429.8 310.6,429.4 312.4,428.4 315.4,429.6 322.7,429.9 346.3,429.9 354.0,429.6 356.0,429.1 359.2,429.8 367.2,430.0 396.1,430.0 398.5,429.8 399.4,429.2 400.1,429.8 403.5,430.0 437.3,429.9 442.8,429.3 444.3,429.7 449.7,430.0 482.1,430.0 485.6,429.6 488.9,430.0 507.5,429.9"/>
<polyline stroke="#d848c8" stroke-width="0.7" points="74.6,428.9 83.6,428.4 88.0,427.5 91.4,425.8 93.0,423.7 94.3,419.7 95.1,413.8 96.2,392.0 97.4,413.8 98.0,418.6 99.0,422.4 99.9,424.4 102.1,426.4 105.0,427.5 109.4,428.3 118.9,428.4 126.0,427.8 131.1,426.6 133.6,425.1 135.7,422.6 137.0,419.5 139.5,405.2 141.2,415.7 142.3,420.1 144.2,423.8 146.3,425.7 150.6,427.4 156.7,428.3 173.1,429.0 179.6,428.5 181.2,427.4 182.1,424.1 182.8,402.3 183.2,419.6 183.9,426.1 184.6,427.6 185.6,428.4 189.5,429.1 209.9,429.0 215.4,428.5 219.9,427.4 222.1,426.1 223.9,423.2 226.1,414.0 228.3,423.2 230.1,426.1 231.8,427.2 234.1,428.0 242.3,429.0 257.2,429.3 265.0,428.8 266.6,428.1 267.7,427.0 269.4,420.8 270.7,426.1 272.1,428.0 274.5,428.9 279.6,429.4 306.6,429.6 310.0,429.3 312.7,427.5 314.4,429.0 317.9,429.6 350.7,429.7 353.1,429.6 356.2,428.8 358.9,429.6 362.3,429.8 395.5,429.9 398.4,429.4 399.3,427.5 400.3,429.5 405.0,429.9 436.3,429.9 440.3,429.8 442.6,429.2 446.5,429.9 478.1,430.0 483.1,429.7 485.9,428.6 487.5,429.5 489.1,429.8 507.5,429.9"/>
<polyline stroke="#e0388f" stroke-width="0.7" points="74.6,425.2 81.6,422.8 84.6,421.0 87.0,418.5 89.7,414.0 90.8,410.5 92.0,405.3 92.9,398.3 94.1,381.7 94.9,357.5 96.2,237.2 97.4,347.3 98.0,371.9 99.0,391.9 100.5,405.1 102.3,412.4 104.0,416.3 105.5,418.5 107.4,420.5 110.4,422.5 114.4,424.0 123.0,425.4 126.8,425.3 129.3,424.9 132.8,423.3 134.9,421.0 136.8,415.8 137.8,410.0 139.5,395.1 141.2,409.8 142.8,417.7 144.6,421.7 147.2,424.3 149.7,425.5 153.1,426.5 160.7,427.5 173.6,428.0 176.6,427.9 179.6,427.1 180.7,426.0 181.2,424.9 182.1,419.5 182.8,377.2 183.2,409.9 183.8,421.7 184.3,424.5 185.1,426.2 188.0,427.9 196.0,428.5 209.9,428.2 216.9,427.3 219.9,426.1 222.4,423.8 223.9,420.2 226.1,406.8 227.9,418.5 228.7,421.3 229.8,423.6 231.8,425.8 233.4,426.7 240.3,428.2 254.7,428.8 262.4,428.5 264.7,428.0 266.9,426.6 267.7,425.3 268.6,421.6 269.4,415.5 270.5,422.9 271.7,426.4 274.1,428.1 280.6,429.0 299.5,429.3 308.0,428.9 310.6,427.7 312.7,424.1 314.4,427.4 316.0,428.5 318.4,429.0 324.4,429.4 348.7,429.3 353.2,428.5 355.7,426.7 356.5,426.8 358.7,428.6 362.3,429.3 369.1,429.5 396.0,429.6 397.7,429.3 398.5,428.5 399.3,425.5 400.3,428.9 402.6,429.5 435.1,429.6 439.8,429.3 442.6,427.9 445.3,429.3 448.9,429.6 479.0,429.7 482.6,429.5 484.2,429.0 485.9,427.4 488.0,429.2 490.2,429.5 507.5,429.7"/>
<polyline stroke="#b858d8" stroke-width="0.7" points="74.6,429.8 88.7,429.5 93.0,428.6 94.1,427.9 95.0,426.6 96.2,421.4 97.5,426.6 98.0,427.5 99.2,428.5 102.6,429.4 111.9,429.8 134.4,429.6 137.0,429.1 139.5,427.5 141.7,428.9 144.3,429.5 165.2,430.0 181.0,430.0 182.3,429.7 182.8,428.5 183.1,429.5 184.1,429.9 192.0,430.1 218.4,430.0 223.9,429.8 226.4,429.1 227.9,429.7 231.2,430.0 246.3,430.1 265.4,430.0 267.9,429.9 269.4,429.4 272.6,430.0 283.1,430.1 310.3,430.0 312.4,429.7 314.5,430.0 330.9,430.1 351.1,430.1 356.0,429.8 360.3,430.1 396.5,430.1 399.4,429.7 399.8,430.0 402.3,430.1 507.5,429.9"/>
<polyline stroke="#7070e8" stroke-width="0.7" points="74.6,428.9 83.1,428.3 88.0,427.3 91.0,425.7 92.8,423.6 94.0,420.1 94.9,414.3 96.2,388.6 97.5,413.2 98.0,417.6 99.0,421.8 100.5,424.7 102.1,426.1 105.0,427.2 109.9,428.1 117.4,428.3 124.7,427.8 129.8,426.7 133.6,424.6 135.7,421.8 137.0,418.3 139.5,402.6 141.2,414.1 142.3,419.0 143.4,421.8 144.8,423.9 147.2,425.8 150.6,427.1 160.7,428.5 177.6,429.0 179.1,428.9 181.1,428.1 181.8,427.2 182.3,424.5 182.8,410.0 183.2,422.4 183.8,427.0 184.8,428.4 185.6,428.7 189.5,429.2 209.4,429.2 215.9,428.8 219.9,428.1 221.8,427.4 222.8,426.5 223.9,425.0 226.1,418.3 227.9,424.3 228.9,425.9 230.1,427.1 231.9,428.0 234.8,428.7 242.8,429.3 258.2,429.5 265.2,429.1 266.9,428.6 267.9,427.7 269.4,423.8 270.5,427.0 271.3,428.2 273.0,429.0 277.7,429.5 301.5,429.7 307.5,429.4 310.6,428.6 312.7,426.2 314.5,428.4 316.4,429.2 324.2,429.7 349.2,429.8 356.2,429.1 361.3,429.8 395.5,429.9 398.0,429.7 398.7,429.4 399.3,428.4 400.3,429.7 402.9,429.9 437.8,429.9 442.8,429.0 445.3,429.7 449.3,429.9 478.6,430.0 483.9,429.8 486.1,429.1 488.6,429.8 507.5,430.0"/>
<polyline stroke="#3098e8" stroke-width="0.7" points="74.6,428.5 83.6,427.7 87.0,426.7 89.1,425.8 90.8,424.4 92.8,421.4 93.9,417.1 94.9,408.9 96.2,374.2 97.4,406.1 98.0,413.1 99.0,419.0 100.1,422.2 102.3,424.9 104.5,426.3 109.9,427.8 115.9,428.3 125.4,428.3 129.4,427.9 133.2,426.8 134.8,425.8 136.8,423.1 137.8,420.3 139.5,412.9 142.3,423.1 144.3,425.8 146.3,427.0 151.8,428.4 162.2,429.1 174.6,429.3 180.1,428.5 180.9,428.0 181.6,426.8 182.2,423.9 182.8,403.7 183.2,420.1 183.8,426.2 185.1,428.2 189.5,429.3 207.5,429.6 220.3,429.0 222.9,428.2 223.9,427.5 226.1,423.8 227.9,427.0 229.8,428.4 233.4,429.2 240.3,429.6 258.2,429.7 266.0,429.2 267.2,428.8 268.3,427.6 269.4,425.0 270.5,427.6 272.0,428.8 274.1,429.4 281.6,429.8 300.9,429.8 307.2,429.5 310.5,428.7 311.2,428.2 312.4,426.3 312.9,426.3 314.4,428.4 315.4,428.9 318.5,429.5 325.9,429.8 349.7,429.9 353.2,429.7 355.5,429.2 358.9,429.7 362.8,429.9 395.8,429.9 398.5,429.6 399.4,428.5 400.0,429.6 403.5,430.0 436.3,429.9 440.3,429.5 442.3,428.6 445.7,429.7 453.3,429.9 480.9,430.0 484.8,429.7 485.6,429.4 490.8,430.0 507.5,429.8"/>
<polyline stroke="#e060b0" stroke-width="0.7" points="74.6,429.8 88.7,429.7 92.9,429.0 94.5,428.1 95.1,427.3 96.2,423.6 97.8,427.9 99.5,429.0 102.5,429.5 109.9,429.9 132.8,429.7 136.8,429.1 139.5,427.5 141.3,428.6 143.3,429.3 148.0,429.8 179.1,430.0 182.1,429.5 182.8,427.4 183.2,429.1 183.7,429.7 188.0,430.0 219.6,430.0 224.3,429.8 226.5,429.4 227.6,429.8 231.3,430.0 264.2,430.0 267.9,429.8 269.4,429.2 271.3,429.9 278.6,430.1 308.0,430.1 313.0,429.6 315.4,430.0 323.9,430.1 507.5,430.0"/>
<polyline stroke="#e0388f" stroke-width="0.7" points="74.6,428.1 84.6,426.6 88.5,425.0 91.0,422.5 92.9,418.3 94.1,412.2 94.9,403.3 96.2,359.2 97.4,399.5 98.8,414.8 100.0,419.6 101.7,422.8 105.0,425.4 108.9,426.6 114.4,427.1 123.8,426.4 129.3,424.7 132.8,422.1 134.9,418.8 136.8,411.9 137.8,404.4 139.5,385.0 141.8,408.7 142.8,414.3 144.6,419.7 147.2,423.0 149.7,424.8 153.5,426.2 160.7,427.4 176.6,428.4 179.6,428.1 181.0,427.2 181.9,425.1 182.3,420.6 182.8,399.4 183.1,416.9 183.8,425.1 184.3,426.7 185.1,427.7 188.0,428.6 206.5,429.1 219.2,428.5 221.8,427.7 223.2,426.6 224.4,425.0 226.1,420.1 227.9,425.1 228.7,426.3 229.8,427.3 233.4,428.6 240.3,429.2 254.7,429.4 264.7,429.1 266.9,428.4 267.7,427.7 269.4,423.0 270.5,426.6 271.7,428.3 275.3,429.3 280.6,429.5 299.5,429.6 308.0,429.3 310.6,428.6 311.8,427.4 312.4,426.2 313.0,426.2 314.4,428.3 316.0,429.1 324.4,429.7 348.7,429.6 353.2,429.0 355.7,427.9 356.5,427.9 358.7,429.1 362.3,429.6 396.0,429.8 398.5,429.2 399.3,427.5 400.3,429.4 402.0,429.8 434.4,429.8 439.8,429.5 442.6,428.4 445.3,429.5 451.2,429.8 481.2,429.8 484.2,429.5 485.6,428.6 488.0,429.6 491.1,429.8 507.5,429.8"/>
<polyline stroke="#e0388f" stroke-width="0.7" points="74.6,429.8 88.5,429.3 93.0,428.2 94.9,425.9 96.2,418.9 97.2,424.5 97.6,425.8 98.8,427.7 100.0,428.5 101.7,429.0 108.9,429.6 125.5,429.6 132.8,429.1 134.9,428.7 136.8,427.9 139.5,424.5 141.8,427.5 144.2,428.8 153.1,429.6 166.2,429.9 181.0,429.7 181.9,429.3 182.2,428.7 182.8,425.0 183.1,427.9 183.6,429.2 185.1,429.7 188.0,429.9 219.2,429.7 223.2,429.1 224.4,428.7 226.1,427.3 228.4,428.9 230.3,429.4 240.3,429.9 264.7,429.9 267.7,429.7 269.4,428.8 270.5,429.5 271.7,429.8 282.6,430.0 308.1,430.0 313.0,429.5 314.2,429.9 316.9,430.0 348.7,430.1 355.0,429.8 362.3,430.1 396.0,430.1 398.5,429.9 399.2,429.4 400.4,430.0 408.5,430.1 439.8,430.0 442.3,429.7 448.9,430.1 482.6,430.1 485.6,429.7 488.0,430.1 507.5,430.0"/>
<polyline stroke="#40c8d8" stroke-width="0.7" points="74.6,430.0 88.0,429.8 92.8,429.3 94.3,428.7 95.1,427.9 96.2,424.9 97.2,427.6 98.5,428.9 101.5,429.6 108.9,429.9 134.0,429.8 137.8,429.1 139.5,428.3 141.3,429.2 142.8,429.5 148.0,429.9 180.8,429.9 182.2,429.5 182.8,427.6 183.1,429.0 183.9,429.8 190.5,430.1 220.3,430.0 223.9,429.8 225.9,429.2 229.0,429.9 237.0,430.1 263.9,430.1 267.7,429.9 269.2,429.3 272.1,430.0 284.1,430.1 312.9,429.8 321.8,430.1 357.2,429.9 360.7,430.1 396.5,430.1 399.3,429.8 402.2,430.1 483.4,430.1 486.1,429.9 507.5,430.1"/>
<polyline stroke="#e0388f" stroke-width="0.7" points="74.6,429.9 88.5,429.5 93.0,428.6 94.9,426.7 96.2,421.1 97.2,425.6 98.8,428.2 101.7,429.2 108.9,429.7 125.5,429.7 132.8,429.2 136.8,428.1 139.5,425.0 141.8,427.8 144.2,428.9 153.1,429.7 166.2,429.9 181.0,429.8 182.0,429.6 182.5,428.9 182.8,426.9 183.1,428.8 183.6,429.5 188.0,429.9 219.2,429.8 223.2,429.2 224.4,428.9 226.1,427.6 228.4,429.1 230.3,429.5 240.3,429.9 264.7,429.9 267.7,429.7 269.4,428.7 270.5,429.5 271.7,429.8 282.6,430.0 308.1,430.0 313.0,429.6 315.1,430.0 324.4,430.1 351.8,430.0 355.0,429.7 367.7,430.1 397.7,430.1 399.2,429.7 400.4,430.1 408.5,430.1 439.8,430.0 442.3,429.7 448.9,430.1 482.6,430.1 485.6,429.8 488.0,430.1 507.5,430.0"/>
<polyline stroke="#e0388f" stroke-width="0.7" points="74.6,429.9 88.5,429.6 93.0,428.9 94.9,427.3 96.2,422.7 97.2,426.4 98.6,428.4 101.7,429.4 108.9,429.8 132.8,429.7 136.8,429.1 139.5,427.6 141.8,429.0 147.2,429.7 179.6,429.9 182.1,429.4 182.8,426.6 183.1,428.6 183.6,429.5 188.0,430.0 219.2,429.8 223.2,429.2 224.4,428.8 226.1,427.5 228.4,429.1 230.3,429.5 240.3,429.9 264.7,430.0 267.7,429.8 269.4,429.2 271.7,429.9 282.6,430.1 308.1,430.0 313.0,429.4 315.1,429.9 324.4,430.1 348.7,430.1 355.0,429.7 362.3,430.1 396.0,430.1 398.5,430.0 399.2,429.7 400.4,430.1 408.5,430.1 439.8,430.0 443.3,429.7 448.9,430.1 482.6,430.1 485.6,429.8 488.0,430.1 507.5,430.0"/>
<polyline stroke="#3098e8" stroke-width="0.7" points="74.6,429.9 84.6,430.0 92.8,429.5 94.7,428.8 96.2,426.2 97.4,428.5 98.6,429.2 101.5,429.7 108.9,430.0 134.8,429.8 137.3,429.6 139.3,428.8 142.3,429.7 145.5,429.9 180.1,430.1 182.1,429.8 182.8,428.7 183.2,429.6 183.8,429.9 194.0,430.1 220.3,430.0 223.9,429.8 226.1,429.0 229.4,429.8 240.3,430.1 266.0,430.1 269.6,429.6 270.5,429.9 277.7,430.1 309.4,430.1 312.4,429.8 315.4,430.1 329.9,430.1 353.2,430.1 355.5,429.8 368.2,430.1 396.8,430.1 399.4,429.8 400.0,430.1 403.5,430.1 507.5,429.9"/>
<polyline stroke="#e8d050" stroke-width="0.7" points="74.6,429.8 86.5,429.9 93.1,429.5 95.1,428.5 96.2,426.4 97.0,428.0 98.0,429.0 100.0,429.6 111.9,430.0 134.3,429.7 137.3,429.1 139.5,428.1 141.2,429.0 142.8,429.4 146.7,429.8 178.1,430.0 182.1,429.7 182.8,428.0 183.3,429.5 184.1,429.9 190.5,430.1 222.5,429.9 226.1,429.0 229.4,429.9 242.3,430.1 266.4,430.0 269.4,429.4 271.3,429.9 287.6,430.1 309.5,430.1 312.1,429.8 320.0,430.1 396.7,430.1 399.5,429.8 402.0,430.1 507.5,430.0"/>
<polyline stroke="#e0388f" stroke-width="0.7" points="74.6,428.7 84.6,427.7 88.5,426.6 91.0,424.9 93.0,421.9 94.1,417.8 94.9,411.8 96.2,381.8 97.4,409.2 98.8,419.7 100.0,423.0 101.7,425.1 105.0,426.9 108.9,427.7 114.4,428.0 123.8,427.5 129.3,426.2 132.8,424.4 134.9,422.0 136.8,417.1 137.8,411.7 139.5,397.9 141.8,414.9 142.8,418.8 144.2,422.1 145.5,423.7 147.2,425.1 149.7,426.3 153.5,427.3 160.7,428.2 176.6,428.8 179.6,428.4 181.0,427.5 181.9,425.5 182.3,421.2 182.8,401.0 183.1,417.6 183.8,425.5 184.3,427.0 185.1,427.9 188.0,428.9 206.5,429.2 214.9,428.8 219.2,428.1 221.8,427.1 223.2,425.6 224.4,423.4 226.1,416.9 227.9,423.5 228.7,425.2 229.8,426.4 231.8,427.7 233.4,428.2 240.3,429.1 254.7,429.4 264.7,429.0 266.9,428.2 267.7,427.4 268.6,425.4 269.4,422.0 270.5,426.1 271.7,428.1 275.3,429.2 282.6,429.6 308.0,429.5 311.2,428.6 312.4,427.1 313.0,427.1 314.4,428.8 316.0,429.3 324.4,429.8 348.7,429.8 356.5,429.1 358.7,429.6 362.3,429.8 396.0,429.9 398.5,429.3 399.2,427.8 400.3,429.5 402.0,429.8 434.4,429.9 439.8,429.6 442.6,428.6 445.3,429.6 448.9,429.8 474.9,429.9 482.6,429.5 484.2,429.0 485.9,427.4 488.0,429.3 490.2,429.6 507.5,429.9"/>
<polyline stroke="#e0388f" stroke-width="0.7" points="74.6,427.8 81.6,426.8 84.6,426.0 88.5,423.9 91.0,420.9 92.9,415.7 94.1,408.1 94.9,397.2 96.2,343.0 97.5,394.6 98.2,406.1 99.0,412.8 100.0,417.3 102.3,422.0 105.0,424.5 106.4,425.3 110.4,426.5 114.4,427.1 123.8,427.1 129.3,426.1 132.8,424.3 134.9,422.0 136.8,417.2 137.8,411.8 139.5,398.1 141.8,414.9 142.8,418.9 144.2,422.1 145.5,423.6 147.2,425.0 149.7,426.2 153.5,427.2 159.7,428.0 176.6,428.7 179.6,428.3 181.0,427.4 181.9,425.5 182.3,421.2 182.8,401.2 183.1,417.7 183.8,425.5 184.3,427.0 185.1,427.9 188.0,428.8 206.5,429.1 214.9,428.6 219.2,427.9 221.8,426.8 223.2,425.2 224.4,422.8 226.1,415.8 227.9,423.0 228.7,424.7 229.8,426.1 231.8,427.5 233.4,428.0 240.3,429.0 253.2,429.4 264.7,429.3 267.7,428.4 269.4,424.9 270.5,427.5 271.7,428.8 275.3,429.4 282.6,429.6 301.2,429.6 308.0,429.2 310.6,428.2 312.7,425.2 314.4,427.9 316.0,428.8 318.4,429.3 324.4,429.6 348.7,429.7 353.6,429.4 355.7,428.8 358.7,429.5 362.3,429.7 396.0,429.8 397.7,429.5 398.5,428.9 399.3,426.4 399.8,428.5 400.4,429.3 402.0,429.7 405.5,429.8 435.1,429.8 439.8,429.5 442.6,428.3 445.3,429.4 451.2,429.8 481.2,429.8 484.2,429.5 485.6,428.6 488.0,429.6 491.1,429.8 507.5,429.9"/>
<polyline stroke="#d848c8" stroke-width="0.7" points="74.6,428.3 83.6,427.4 88.0,426.0 91.4,423.2 93.0,419.8 94.3,413.3 95.0,405.1 96.2,368.8 97.4,403.8 98.0,411.6 99.0,417.8 99.9,421.0 102.1,424.2 105.0,426.1 109.4,427.3 117.9,427.9 126.0,427.5 131.1,426.2 133.6,424.7 135.7,421.9 137.0,418.5 139.5,403.1 141.7,416.7 142.8,420.7 144.6,423.8 146.7,425.6 149.7,426.9 154.2,427.8 161.2,428.5 176.1,428.9 179.6,428.6 181.0,427.9 181.8,426.6 182.2,424.0 182.8,405.9 183.2,421.0 183.6,425.5 184.1,427.1 184.8,428.1 186.1,428.7 188.0,429.1 209.9,429.2 218.9,428.5 222.1,427.4 223.9,425.6 226.1,419.5 228.3,425.6 230.1,427.4 234.1,428.7 242.3,429.3 254.7,429.6 265.0,429.3 267.7,428.4 269.4,424.9 270.7,427.9 271.3,428.6 273.1,429.2 277.7,429.6 306.6,429.6 310.0,429.2 311.0,428.8 312.7,427.2 314.4,428.8 316.4,429.4 326.9,429.8 350.7,429.7 353.1,429.6 356.2,428.8 358.9,429.6 362.3,429.8 395.5,429.9 398.4,429.5 399.3,428.0 399.9,429.3 401.6,429.8 436.3,429.9 440.3,429.6 442.6,428.7 444.5,429.5 448.9,429.9 476.9,429.9 483.1,429.5 484.1,429.2 485.9,427.9 487.5,429.2 489.9,429.7 507.5,429.9"/>
<polyline stroke="#c8b868" stroke-width="0.7" points="74.6,430.0 84.1,429.9 92.8,429.4 94.0,429.0 95.0,428.2 96.2,425.3 97.6,428.2 99.5,429.3 110.9,429.9 132.3,429.8 136.8,429.5 139.3,428.4 141.7,429.3 145.1,429.8 157.7,430.0 181.1,430.0 182.3,429.7 182.8,428.7 183.3,429.7 183.9,429.9 192.0,430.1 220.7,429.9 222.8,429.8 225.9,429.0 230.3,429.9 247.8,430.1 265.6,430.0 269.7,429.5 270.7,429.9 276.6,430.1 304.8,430.1 312.9,429.8 318.9,430.1 352.3,430.1 354.2,429.9 396.8,430.1 399.2,429.8 402.2,430.1 442.8,429.9 507.5,430.1"/>
<polyline stroke="#d848c8" stroke-width="0.7" points="74.6,429.6 88.0,429.1 91.4,428.4 93.0,427.6 94.3,426.0 95.1,423.7 96.2,415.0 97.4,423.7 98.0,425.6 99.0,427.0 101.0,428.4 103.4,429.0 109.4,429.5 126.0,429.7 133.6,429.4 137.0,428.6 139.5,426.5 141.2,428.1 142.8,428.9 148.7,429.6 164.2,429.9 181.0,429.6 182.2,428.7 182.8,424.6 183.6,429.0 184.8,429.7 188.0,429.9 211.9,429.8 220.9,429.3 223.9,428.2 226.1,425.6 228.3,428.2 230.1,429.0 234.1,429.6 242.3,429.8 265.0,429.9 268.1,429.6 269.4,428.6 271.3,429.7 277.7,430.0 306.6,430.0 310.0,429.9 312.9,429.1 314.4,429.7 316.4,429.9 326.9,430.1 353.1,430.0 356.2,429.6 362.3,430.0 395.5,430.1 398.4,429.9 399.2,429.2 400.3,429.9 405.0,430.1 436.3,430.1 442.6,429.7 446.5,430.1 481.2,430.1 485.9,429.6 489.1,430.0 507.5,430.0"/>
<polyline stroke="#e060b0" stroke-width="0.7" points="74.6,429.6 88.7,429.0 91.2,428.5 92.9,427.6 94.1,426.2 95.0,424.0 96.2,415.1 97.5,424.0 98.2,425.9 99.5,427.6 102.5,428.8 109.9,429.5 126.0,429.5 132.8,428.9 134.9,428.4 136.8,427.4 139.5,423.4 141.8,426.8 144.2,428.4 151.0,429.4 163.7,429.8 181.0,429.7 182.2,429.0 182.8,425.6 183.2,428.4 183.7,429.4 184.7,429.7 188.0,429.9 219.6,429.8 223.9,429.4 226.5,428.3 227.9,429.3 231.3,429.8 264.2,429.9 267.9,429.5 269.4,428.3 270.2,429.1 271.3,429.6 278.6,430.0 308.0,430.0 313.0,429.4 315.4,430.0 323.9,430.1 351.3,430.1 356.5,429.8 359.9,430.0 397.4,430.1 399.3,429.6 399.9,430.0 401.9,430.1 438.6,430.1 442.3,429.8 445.3,430.1 479.1,430.1 485.6,429.7 490.1,430.1 507.5,430.0"/>
<polyline stroke="#e07038" stroke-width="0.7" points="74.6,426.3 77.6,425.9 82.6,424.4 85.5,422.9 87.5,421.2 89.5,418.8 91.0,415.6 92.9,407.3 94.1,395.5 95.0,374.1 96.2,292.1 97.4,371.0 98.0,388.4 99.0,402.8 100.5,412.2 102.5,417.8 103.4,419.4 105.5,421.7 107.9,423.3 110.4,424.4 117.9,425.7 124.3,425.4 127.3,424.7 129.8,423.7 131.3,422.7 133.2,420.8 135.3,416.7 136.8,410.5 139.5,381.7 141.8,407.0 142.8,413.0 144.3,418.0 145.8,420.8 147.2,422.4 150.1,424.5 155.2,426.2 160.7,427.1 170.6,428.0 177.6,428.1 179.1,428.1 181.2,427.3 181.9,426.0 182.3,422.6 182.8,405.8 183.6,425.0 184.0,426.6 184.6,427.5 187.1,428.3 195.0,428.7 209.4,428.7 215.6,428.3 219.9,427.4 222.5,425.9 223.9,423.5 226.1,414.8 228.4,423.7 230.3,426.4 233.8,427.9 240.3,428.8 259.2,429.2 265.2,428.8 267.1,428.0 267.9,427.0 269.4,422.2 270.5,426.2 271.5,427.9 274.1,428.9 277.1,429.2 307.0,429.3 310.5,428.6 311.5,427.9 312.7,426.2 314.4,428.3 315.7,429.0 321.8,429.5 349.7,429.4 353.7,428.5 356.0,426.9 359.2,428.8 362.8,429.4 395.6,429.7 398.0,429.3 398.8,428.1 399.3,426.1 399.7,428.1 400.5,429.2 405.5,429.7 436.3,429.5 440.3,428.8 442.3,427.2 442.8,427.1 444.1,428.4 445.8,429.1 450.4,429.6 480.6,429.7 483.9,429.3 485.6,428.0 486.1,428.0 487.8,429.3 489.6,429.6 507.5,429.8"/>
<polyline stroke="#c8b868" stroke-width="0.7" points="74.6,424.7 79.6,423.2 82.6,421.6 84.1,420.7 87.5,416.9 89.5,413.1 90.8,409.0 92.8,397.6 94.0,380.3 94.9,351.8 96.2,222.0 97.5,345.6 98.2,373.1 99.2,391.3 100.7,404.5 101.7,409.0 103.0,413.2 105.9,418.2 108.4,420.6 110.9,422.1 114.4,423.5 117.9,424.4 123.4,425.0 128.5,424.5 130.8,423.8 132.8,422.5 135.3,419.0 136.8,414.0 137.8,407.2 139.5,390.9 141.3,407.6 142.5,415.0 143.8,419.1 145.1,421.4 147.2,423.6 149.7,425.0 154.0,426.2 163.7,427.4 175.1,427.4 177.6,426.8 179.6,425.6 180.8,423.4 181.3,421.3 182.1,411.8 182.8,345.1 183.2,397.9 183.8,417.3 184.4,421.6 185.1,424.1 186.6,426.1 189.0,427.3 192.0,427.8 200.5,428.0 209.9,427.4 215.9,426.2 217.8,425.4 219.9,423.8 221.9,421.1 223.6,415.9 224.7,408.3 226.1,392.8 227.9,411.5 228.9,416.8 230.3,421.2 232.3,423.9 234.3,425.3 237.0,426.4 242.8,427.6 252.2,428.3 259.7,428.2 263.5,427.6 265.6,426.6 267.2,424.4 267.9,421.9 269.4,408.9 270.7,420.9 271.3,423.6 272.4,425.8 273.6,426.9 275.6,427.8 281.6,428.7 300.0,429.0 304.8,428.8 307.8,428.2 310.0,427.1 310.9,426.0 312.7,420.6 313.9,424.6 314.8,426.5 315.9,427.6 318.9,428.6 323.9,429.1 349.2,429.3 353.1,428.8 356.0,427.2 359.2,428.9 362.8,429.3 396.0,429.5 398.3,428.8 399.3,425.0 400.1,428.5 400.8,429.1 402.2,429.5 436.7,429.4 439.8,428.8 442.8,427.0 444.8,428.7 446.9,429.2 449.8,429.5 479.3,429.5 482.1,429.1 484.1,428.2 485.9,425.3 487.6,428.1 490.2,429.2 495.1,429.6 507.5,429.7"/>
<polyline stroke="#d848c8" stroke-width="0.7" points="74.6,429.8 88.0,429.7 93.0,429.1 94.5,428.3 95.1,427.6 96.2,424.0 97.4,427.6 98.4,428.6 101.0,429.4 109.4,429.9 133.6,429.5 137.0,428.8 139.5,427.1 142.3,428.9 144.6,429.4 161.2,430.0 181.2,429.9 182.2,429.4 182.8,427.3 183.2,429.1 183.9,429.7 189.5,430.0 220.9,429.9 223.9,429.6 225.9,428.7 228.3,429.5 230.1,429.8 242.3,430.0 265.0,429.9 268.1,429.6 269.4,428.7 271.3,429.8 277.7,430.0 310.0,430.0 312.9,429.7 317.9,430.1 353.1,430.1 356.2,429.9 397.2,430.1 399.2,429.6 400.3,430.0 405.0,430.1 436.3,430.1 442.2,429.8 446.5,430.1 481.2,430.1 485.9,429.7 489.1,430.1 507.5,430.0"/>
<polyline stroke="#c8b868" stroke-width="0.7" points="74.6,428.1 84.1,426.6 87.5,425.2 89.5,423.8 90.8,422.3 92.8,418.2 94.0,411.9 94.9,401.4 96.2,354.1 97.5,399.1 98.2,409.1 99.2,415.9 100.5,420.3 101.7,422.4 103.0,423.9 105.9,425.7 110.9,427.1 117.9,427.8 123.4,427.8 127.7,427.4 130.8,426.6 132.8,425.8 135.3,423.6 136.8,420.5 137.8,416.4 139.5,406.5 141.3,416.5 142.3,420.5 143.8,423.6 145.1,425.0 147.2,426.4 149.7,427.2 154.0,428.0 163.7,428.8 175.1,428.9 179.6,428.2 181.3,426.5 182.1,422.6 182.8,395.3 183.2,416.9 183.8,424.9 184.4,426.6 185.1,427.6 186.1,428.2 189.0,428.9 202.5,429.2 212.4,429.0 217.4,428.5 220.4,427.7 222.8,426.1 223.9,424.4 226.1,416.7 227.9,423.4 228.7,425.1 230.3,426.9 234.3,428.4 242.8,429.2 259.7,429.2 263.5,428.8 265.6,428.2 266.6,427.5 267.7,426.1 268.3,424.3 269.4,418.4 270.7,425.1 271.3,426.5 272.4,427.8 275.6,428.9 281.6,429.4 300.0,429.6 307.8,429.2 310.9,428.0 312.7,425.3 313.9,427.4 315.9,428.9 318.9,429.4 323.9,429.6 349.2,429.7 353.1,429.4 356.0,428.4 358.4,429.3 362.8,429.7 396.0,429.8 398.3,429.3 399.3,426.7 400.1,429.1 402.2,429.8 436.7,429.9 441.0,429.6 442.8,429.1 444.5,429.7 449.8,429.9 479.3,429.9 484.1,429.3 485.9,428.1 487.6,429.3 490.2,429.8 507.5,429.9"/>
<polyline stroke="#c8b868" stroke-width="0.6" points="74.6,424.0 79.6,422.3 82.6,420.6 85.0,418.5 87.5,415.3 89.5,411.1 90.8,406.5 92.8,393.8 94.0,374.6 94.9,342.7 96.2,197.9 97.5,335.8 98.2,366.5 99.2,386.8 100.7,401.5 101.7,406.6 103.0,411.2 105.9,416.7 108.4,419.3 110.9,421.0 114.4,422.4 117.9,423.2 121.9,423.6 125.5,423.2 127.7,422.6 130.8,420.7 132.3,419.2 133.8,416.6 135.3,412.6 136.8,404.6 137.8,393.6 139.5,367.4 142.1,403.0 143.4,410.9 145.1,416.5 147.2,420.1 148.4,421.4 151.0,423.1 154.8,424.7 160.7,426.0 175.1,427.3 179.6,427.3 181.1,426.8 181.9,425.0 182.3,421.7 182.8,403.4 183.4,422.9 183.9,425.7 185.1,427.2 192.0,428.0 208.0,428.0 215.9,427.3 219.6,426.0 221.8,424.3 222.8,422.7 223.6,420.8 224.7,416.0 226.1,406.0 227.6,416.1 228.7,421.0 230.3,424.2 232.3,425.9 236.3,427.3 242.8,428.1 252.2,428.2 259.7,427.6 261.7,427.1 263.5,426.4 265.6,424.5 267.2,420.9 268.3,412.8 269.4,395.4 270.7,415.1 271.3,419.5 272.1,422.5 273.6,425.0 275.6,426.6 277.7,427.3 281.6,428.1 289.1,428.6 300.0,428.5 304.8,428.0 307.8,426.9 310.0,424.8 310.9,422.6 312.7,412.8 314.4,422.3 315.9,425.6 317.2,426.8 318.9,427.6 323.9,428.5 339.0,429.1 349.2,428.7 353.1,427.3 356.0,423.8 359.2,427.6 362.8,428.7 373.2,429.3 395.0,429.1 397.0,428.6 398.3,427.1 399.3,418.2 399.8,425.0 400.5,427.5 401.9,428.8 404.0,429.2 413.5,429.5 426.8,429.4 436.7,428.8 439.8,427.5 441.0,426.2 442.3,423.6 442.8,423.4 444.1,426.2 445.8,427.9 449.8,429.0 460.2,429.5 479.3,429.5 482.1,429.4 484.1,428.8 485.9,427.0 487.6,428.8 490.2,429.4 507.5,429.7"/>
<polyline stroke="#3098e8" stroke-width="0.6" points="74.6,425.7 78.6,425.0 81.6,424.0 84.6,422.6 87.0,420.7 89.1,418.1 90.8,414.4 92.8,406.1 93.9,394.6 94.9,372.1 96.2,276.5 97.4,364.3 98.0,383.6 99.0,399.4 100.1,408.3 102.0,415.1 104.5,419.4 106.4,421.1 108.9,422.6 112.4,423.6 116.9,423.9 121.9,423.4 124.9,422.5 127.3,421.2 129.4,419.7 131.8,416.7 133.2,414.0 135.3,406.5 136.8,395.5 137.8,381.4 139.5,344.8 141.2,380.5 142.3,395.5 143.8,406.6 145.1,411.7 146.3,414.9 148.0,417.9 150.2,420.4 154.2,422.9 158.2,424.3 165.2,425.6 174.1,426.0 177.1,425.2 179.1,423.9 180.1,422.2 181.0,418.5 181.6,413.4 182.1,403.5 182.8,296.7 183.2,379.8 183.8,410.1 184.6,418.3 185.6,422.2 186.6,423.9 187.6,424.9 189.5,425.9 194.0,426.8 198.5,426.9 204.0,426.6 209.9,425.8 214.4,424.5 215.9,423.8 218.5,421.8 219.9,420.0 221.4,417.1 222.4,413.9 223.9,404.8 226.1,369.9 227.9,399.3 228.7,407.3 229.8,413.5 231.2,418.0 233.4,421.5 235.9,423.6 241.3,425.8 249.3,427.0 257.2,427.2 261.6,426.5 263.2,425.9 265.2,424.3 266.9,421.0 267.9,415.3 269.4,391.4 270.5,410.9 271.1,417.0 272.0,421.0 273.2,423.8 275.1,425.8 277.7,426.9 281.6,427.7 296.5,428.5 304.0,428.5 307.2,428.1 309.4,427.3 310.6,426.0 312.7,419.8 314.4,425.4 315.4,426.8 316.9,427.8 318.5,428.2 323.9,428.8 339.3,429.0 349.7,428.4 351.8,427.8 353.2,426.9 355.7,423.2 356.5,423.4 357.7,425.8 359.4,427.4 362.8,428.5 368.2,429.0 396.8,429.3 398.1,428.9 398.5,428.4 399.3,425.3 399.7,427.6 400.4,428.8 401.3,429.2 403.5,429.4 436.3,429.2 440.2,428.3 442.6,426.0 444.8,428.2 447.7,429.1 457.2,429.5 478.2,429.5 481.2,429.2 483.7,428.5 484.8,427.5 485.9,425.6 487.2,427.8 488.3,428.7 490.8,429.3 499.0,429.6 507.5,429.5"/>
<polyline stroke="#58d868" stroke-width="0.6" points="74.6,424.7 79.1,423.7 82.6,422.1 86.0,419.6 88.0,417.2 89.5,414.7 91.0,410.2 92.8,400.5 94.0,385.1 94.9,359.2 96.2,242.3 97.4,349.5 98.0,373.3 98.8,389.9 100.1,403.4 102.1,412.0 103.6,415.6 105.5,418.1 107.4,419.9 108.9,420.8 112.9,422.0 117.4,422.2 119.9,421.9 123.4,420.8 125.9,419.5 128.1,417.7 130.2,415.2 132.3,411.0 133.6,407.2 135.3,398.6 136.8,384.0 137.8,365.1 139.5,316.1 141.8,375.9 142.8,390.1 144.3,401.8 146.3,410.0 147.7,413.4 149.7,416.6 151.2,418.2 154.4,420.7 159.7,423.1 164.7,424.4 174.1,425.8 178.6,426.1 180.6,425.6 181.3,424.7 182.0,421.8 182.4,416.2 182.8,390.1 183.2,414.6 183.7,422.3 184.2,424.5 184.9,425.7 186.1,426.3 188.5,426.8 197.5,427.3 210.9,427.2 214.9,426.7 217.4,426.0 220.4,424.4 221.9,422.7 222.9,420.8 223.9,417.0 226.1,400.0 227.9,414.7 228.9,419.2 230.3,422.7 231.9,424.6 233.8,425.8 236.8,426.8 241.8,427.6 255.7,428.3 262.2,428.1 265.0,427.5 266.7,426.4 267.7,424.7 268.3,422.3 269.4,414.6 270.7,423.3 272.2,426.5 273.6,427.5 275.3,428.1 281.1,428.6 301.5,428.8 307.8,428.3 310.6,426.7 312.7,421.5 314.2,425.7 315.4,427.3 317.5,428.3 323.9,429.0 338.8,429.2 349.3,428.9 352.8,428.2 354.0,427.6 356.0,425.8 359.2,428.3 365.2,429.1 396.1,429.4 397.8,429.2 398.5,428.7 399.3,426.5 400.1,428.8 401.5,429.3 430.4,429.3 436.3,428.9 438.6,428.4 440.3,427.3 442.2,424.3 442.8,424.1 444.3,426.8 445.3,427.7 446.5,428.4 449.7,429.0 460.7,429.5 480.6,429.4 482.1,429.2 484.1,428.4 485.9,426.3 487.8,428.6 489.7,429.2 495.9,429.5 507.5,429.5"/>
<polyline stroke="#e0388f" stroke-width="1.2" points="74.6,421.2 79.6,418.6 82.6,416.1 85.0,413.1 87.5,408.3 89.7,401.6 91.0,394.2 92.9,373.7 94.1,344.5 94.9,301.3 96.2,88.0 97.4,283.4 98.0,327.0 99.0,362.5 100.5,385.8 102.5,399.7 104.0,405.5 105.5,409.4 107.4,412.9 110.4,416.2 114.4,418.7 116.9,419.5 121.9,420.2 124.9,419.7 127.2,418.8 129.8,416.8 132.3,413.1 133.6,409.8 135.3,402.7 136.8,390.2 137.8,374.0 139.5,332.0 141.2,373.1 142.3,390.2 143.8,402.9 144.6,407.1 146.3,412.3 147.7,415.4 150.6,418.8 153.5,421.0 157.2,422.7 163.2,424.3 171.1,425.3 176.6,425.3 179.6,423.8 180.7,421.6 181.4,418.2 182.1,406.9 182.8,323.5 183.2,389.6 183.8,413.1 184.3,418.7 185.1,422.1 186.6,424.4 188.0,425.5 192.0,426.3 196.0,426.6 204.0,426.6 209.9,426.1 213.9,425.3 216.9,424.2 219.9,421.7 221.8,418.5 223.6,411.3 224.7,401.4 226.1,380.7 227.9,405.5 228.7,411.4 229.8,416.4 231.3,420.2 233.4,422.9 235.9,424.6 240.3,426.1 245.3,426.9 254.7,427.5 261.2,427.4 264.7,426.5 266.9,424.4 267.7,422.3 268.3,418.4 269.4,406.8 270.5,418.5 271.7,424.0 273.0,425.8 274.1,426.7 276.6,427.5 280.6,428.0 299.5,428.4 304.5,428.2 308.0,427.4 309.7,426.4 310.6,425.1 312.7,417.2 314.4,424.3 316.0,426.6 318.4,427.8 324.4,428.6 338.0,428.9 348.7,428.6 351.8,428.1 353.2,427.4 356.0,424.5 356.5,424.7 358.7,427.4 362.3,428.6 378.1,429.1 396.0,429.0 397.7,428.5 398.4,427.6 399.3,421.8 400.3,427.9 401.0,428.6 402.6,429.0 426.9,429.3 435.9,429.0 439.8,428.2 442.6,425.3 444.3,427.5 445.3,428.2 448.9,429.0 461.7,429.4 479.0,429.1 481.2,428.8 483.4,427.9 484.5,426.6 485.9,423.3 487.1,426.5 488.0,427.8 490.2,428.8 494.6,429.3 507.5,429.4"/>
<polyline stroke="#b858d8" stroke-width="0.8" points="74.6,424.6 79.6,423.1 83.1,421.3 85.0,419.8 88.0,416.2 89.5,413.4 91.0,408.5 92.8,398.0 94.1,378.8 94.9,352.9 96.2,225.3 97.4,342.3 98.0,368.4 99.0,389.5 100.5,403.7 102.6,412.3 103.8,415.0 105.5,417.5 106.9,419.2 109.9,421.2 114.4,422.8 117.4,423.2 122.9,422.9 125.1,422.4 128.9,420.5 130.6,418.9 133.3,414.5 135.3,408.0 137.0,395.8 139.5,350.3 141.8,392.1 142.8,402.0 144.8,412.0 146.8,416.7 148.7,419.4 150.6,421.2 155.2,423.6 161.2,425.3 170.6,426.5 176.6,426.6 179.1,426.1 180.1,425.3 181.1,423.7 181.9,419.3 182.3,411.6 182.8,363.6 183.2,404.8 183.8,419.3 184.4,423.0 185.1,424.9 186.6,426.2 188.5,427.0 192.0,427.4 198.5,427.5 208.0,427.1 215.6,425.7 218.4,424.3 219.9,423.0 222.1,419.4 223.6,414.1 224.7,405.6 226.1,388.1 227.9,409.2 229.0,415.8 230.3,419.9 232.3,423.0 235.3,425.2 239.3,426.6 244.3,427.4 249.8,427.9 259.7,428.0 263.2,427.6 265.4,426.9 266.9,425.3 267.9,422.7 269.4,410.7 270.7,421.7 271.1,423.5 272.2,425.7 273.4,426.9 275.3,427.8 281.1,428.5 300.5,428.9 307.5,428.2 309.0,427.8 310.3,426.8 311.2,425.4 312.7,420.6 314.5,426.0 315.7,427.4 318.1,428.4 323.4,428.9 339.8,429.2 349.8,428.8 352.1,428.3 353.7,427.4 356.0,425.1 358.2,427.5 359.4,428.2 361.7,428.8 372.7,429.3 395.9,429.3 397.5,429.0 398.5,428.2 399.3,424.1 400.1,428.2 401.0,429.1 402.7,429.4 435.9,429.3 440.2,428.6 442.6,426.7 444.9,428.6 448.5,429.3 455.6,429.5 475.8,429.4 480.6,428.9 483.1,428.0 484.6,426.1 485.9,422.5 487.5,426.9 488.6,428.0 490.5,428.8 496.6,429.4 507.5,429.4"/>
</g>
<path d="M70 59.6V459" stroke="#f4f4f4" stroke-width="2.1" fill="none"/>
<path d="M62.2 457.9H519.5" stroke="#8a8a8a" stroke-width="1.6" fill="none"/>
<path d="M69 459.6H519.5" stroke="#ececec" stroke-width="2" fill="none"/>
<g font-family="Liberation Sans, Arial, sans-serif" font-size="9.6" fill="#d2d2d2">
<text x="32.3" y="435.00" textLength="5.0" lengthAdjust="spacingAndGlyphs">0</text>
<text x="32.3" y="408.19" textLength="18.0" lengthAdjust="spacingAndGlyphs">1.25</text>
<text x="32.3" y="381.39" textLength="13.2" lengthAdjust="spacingAndGlyphs">2.5</text>
<text x="32.3" y="354.58" textLength="18.0" lengthAdjust="spacingAndGlyphs">3.75</text>
<text x="32.3" y="327.59" textLength="5.0" lengthAdjust="spacingAndGlyphs">5</text>
<text x="32.3" y="300.60" textLength="18.0" lengthAdjust="spacingAndGlyphs">6.25</text>
<text x="32.3" y="273.61" textLength="13.2" lengthAdjust="spacingAndGlyphs">7.5</text>
<text x="32.3" y="246.62" textLength="18.0" lengthAdjust="spacingAndGlyphs">8.75</text>
<text x="32.3" y="219.63" textLength="10.2" lengthAdjust="spacingAndGlyphs">10</text>
<text x="32.3" y="192.64" textLength="22.7" lengthAdjust="spacingAndGlyphs">11.25</text>
<text x="32.3" y="165.65" textLength="18.0" lengthAdjust="spacingAndGlyphs">12.5</text>
<text x="32.3" y="138.66" textLength="22.7" lengthAdjust="spacingAndGlyphs">13.75</text>
<text x="32.3" y="111.49" textLength="10.2" lengthAdjust="spacingAndGlyphs">15</text>
<text x="32.3" y="84.13" textLength="22.7" lengthAdjust="spacingAndGlyphs">16.25</text>
<text x="19.2" y="74.9" textLength="46.8" lengthAdjust="spacingAndGlyphs">Value (mA)</text>
<text x="69.90" y="482.6" textLength="5.3" lengthAdjust="spacingAndGlyphs">0</text>
<text x="156.48" y="482.6" textLength="5.3" lengthAdjust="spacingAndGlyphs">2</text>
<text x="243.06" y="482.6" textLength="5.3" lengthAdjust="spacingAndGlyphs">4</text>
<text x="329.64" y="482.6" textLength="5.3" lengthAdjust="spacingAndGlyphs">6</text>
<text x="416.22" y="482.6" textLength="5.3" lengthAdjust="spacingAndGlyphs">8</text>
<text x="502.80" y="482.6" textLength="10.6" lengthAdjust="spacingAndGlyphs">10</text>
<text x="268.8" y="496.2" textLength="66.5" lengthAdjust="spacingAndGlyphs">Frequency(GHz)</text>
</g>
</svg>
<svg class="ui" width="717" height="583" viewBox="0 0 717 583">
<rect x="530.00" y="54.00" width="166.50" height="17.00" fill="#f1f1f1" />
<path d="M531.50 69.00V55.50H694.50" stroke="#ffffff" stroke-width="1.00" fill="none" />
<path d="M694.20 56.00V68.70H532.00" stroke="#fafafa" stroke-width="1.00" fill="none" />
<path d="M530.60 71.00V54.60H696.50" stroke="#828282" stroke-width="1.25" fill="none" />
<path d="M695.55 54.00V70.05H530.00" stroke="#585858" stroke-width="1.90" fill="none" />
<circle cx="538.40" cy="82.20" r="4.40" fill="#fff"/>
<path d="M535.50 85.10A4.10 4.10 0 0 0 541.30 79.30" stroke="#e4e4e4" stroke-width="1" fill="none"/>
<path d="M535.50 85.10A4.10 4.10 0 0 1 541.30 79.30" stroke="#6e6e6e" stroke-width="1.05" fill="none"/>
<circle cx="538.40" cy="82.20" r="1.65" fill="#000"/>
<circle cx="538.40" cy="93.40" r="4.40" fill="#fff"/>
<path d="M535.50 96.30A4.10 4.10 0 0 0 541.30 90.50" stroke="#e4e4e4" stroke-width="1" fill="none"/>
<path d="M535.50 96.30A4.10 4.10 0 0 1 541.30 90.50" stroke="#6e6e6e" stroke-width="1.05" fill="none"/>
<circle cx="538.40" cy="104.80" r="4.40" fill="#fff"/>
<path d="M535.50 107.70A4.10 4.10 0 0 0 541.30 101.90" stroke="#e4e4e4" stroke-width="1" fill="none"/>
<path d="M535.50 107.70A4.10 4.10 0 0 1 541.30 101.90" stroke="#6e6e6e" stroke-width="1.05" fill="none"/>
<circle cx="612.80" cy="82.20" r="4.40" fill="#fff"/>
<path d="M609.90 85.10A4.10 4.10 0 0 0 615.70 79.30" stroke="#e4e4e4" stroke-width="1" fill="none"/>
<path d="M609.90 85.10A4.10 4.10 0 0 1 615.70 79.30" stroke="#6e6e6e" stroke-width="1.05" fill="none"/>
<circle cx="612.80" cy="93.40" r="4.40" fill="#fff"/>
<path d="M609.90 96.30A4.10 4.10 0 0 0 615.70 90.50" stroke="#e4e4e4" stroke-width="1" fill="none"/>
<path d="M609.90 96.30A4.10 4.10 0 0 1 615.70 90.50" stroke="#6e6e6e" stroke-width="1.05" fill="none"/>
<rect x="531.00" y="115.20" width="163.20" height="131.00" fill="#fff" />
<path d="M531.5 246.2V115.7H694.2" stroke="#8c8c8c" stroke-width="1.00" fill="none" />
<path d="M693.7 116.2V245.7H532" stroke="#e6e6e6" stroke-width="1.00" fill="none" />
<rect x="681.30" y="118.00" width="11.90" height="116.40" fill="#f0f0f0" />
<rect x="532.00" y="234.40" width="161.20" height="10.80" fill="#f0f0f0" />
<rect x="681.50" y="129.00" width="10.70" height="12.40" fill="#cdcdcd" />
<rect x="545.00" y="235.20" width="108.00" height="9.40" fill="#cdcdcd" />
<g stroke="#3c3c3c" stroke-width="1.4" fill="none"><path d="M684.3 124.6L687.1 121.8L689.9 124.6"/><path d="M684.3 225.8L687.1 228.6L689.9 225.8"/><path d="M539.6 237.2L536.8 240L539.6 242.8"/><path d="M673.4 237.2L676.2 240L673.4 242.8"/></g>
<g stroke="#bdbdbd" stroke-width="1" fill="none"><path d="M538.5 127.5V234.4"/><path d="M542 134.4H548"/><path d="M552.6 139V234.4"/><path d="M556 146.4H562 M556 181.7H562 M556 217.3H562"/><path d="M566.6 151V170.3H576 M566.6 158.3H576"/><path d="M566.6 186V205.8H576 M566.6 193.8H576"/><path d="M566.6 222V234.4 M566.6 229.4H576"/></g>
<rect x="558.40" y="118.00" width="50.00" height="9.60" fill="#e9e9e9" />
<rect x="534.65" y="119.00" width="7.80" height="7.80" fill="#fff" stroke="#4a4a4a" stroke-width="1.1"/>
<path d="M536.24 122.90L537.93 124.68L540.95 121.03" stroke="#000" stroke-width="1.50" fill="none" />
<rect x="535.60" y="131.50" width="5.80" height="5.80" fill="#fff" stroke="#a0a0a0" stroke-width="1"/>
<path d="M536.60 134.40H540.40" stroke="#333" stroke-width="1.00" fill="none" />
<rect x="548.65" y="130.60" width="7.80" height="7.80" fill="#fff" stroke="#4a4a4a" stroke-width="1.1"/>
<path d="M550.24 134.50L551.93 136.28L554.95 132.63" stroke="#000" stroke-width="1.50" fill="none" />
<rect x="549.70" y="143.50" width="5.80" height="5.80" fill="#fff" stroke="#a0a0a0" stroke-width="1"/>
<path d="M550.70 146.40H554.50" stroke="#333" stroke-width="1.00" fill="none" />
<rect x="562.75" y="142.60" width="7.80" height="7.80" fill="#fff" stroke="#4a4a4a" stroke-width="1.1"/>
<path d="M564.34 146.50L566.03 148.28L569.05 144.63" stroke="#000" stroke-width="1.50" fill="none" />
<rect x="576.85" y="154.30" width="7.80" height="7.80" fill="#fff" stroke="#4a4a4a" stroke-width="1.1"/>
<path d="M578.44 158.20L580.13 159.98L583.15 156.33" stroke="#000" stroke-width="1.50" fill="none" />
<rect x="587.20" y="153.20" width="10.40" height="9.60" fill="#e0388f" />
<rect x="576.85" y="166.30" width="7.80" height="7.80" fill="#fff" stroke="#4a4a4a" stroke-width="1.1"/>
<path d="M578.44 170.20L580.13 171.98L583.15 168.33" stroke="#000" stroke-width="1.50" fill="none" />
<rect x="587.20" y="165.20" width="10.40" height="9.60" fill="#90e0b0" />
<rect x="549.70" y="178.70" width="5.80" height="5.80" fill="#fff" stroke="#a0a0a0" stroke-width="1"/>
<path d="M550.70 181.60H554.50" stroke="#333" stroke-width="1.00" fill="none" />
<rect x="562.75" y="177.80" width="7.80" height="7.80" fill="#fff" stroke="#4a4a4a" stroke-width="1.1"/>
<path d="M564.34 181.70L566.03 183.48L569.05 179.83" stroke="#000" stroke-width="1.50" fill="none" />
<rect x="576.85" y="189.90" width="7.80" height="7.80" fill="#fff" stroke="#4a4a4a" stroke-width="1.1"/>
<path d="M578.44 193.80L580.13 195.58L583.15 191.93" stroke="#000" stroke-width="1.50" fill="none" />
<rect x="587.20" y="188.80" width="10.40" height="9.60" fill="#b858d8" />
<rect x="576.85" y="201.90" width="7.80" height="7.80" fill="#fff" stroke="#4a4a4a" stroke-width="1.1"/>
<path d="M578.44 205.80L580.13 207.58L583.15 203.93" stroke="#000" stroke-width="1.50" fill="none" />
<rect x="587.20" y="200.80" width="10.40" height="9.60" fill="#c8b868" />
<rect x="549.70" y="214.30" width="5.80" height="5.80" fill="#fff" stroke="#a0a0a0" stroke-width="1"/>
<path d="M550.70 217.20H554.50" stroke="#333" stroke-width="1.00" fill="none" />
<rect x="562.75" y="213.40" width="7.80" height="7.80" fill="#fff" stroke="#4a4a4a" stroke-width="1.1"/>
<path d="M564.34 217.30L566.03 219.08L569.05 215.43" stroke="#000" stroke-width="1.50" fill="none" />
<rect x="576.85" y="225.50" width="7.80" height="7.80" fill="#fff" stroke="#4a4a4a" stroke-width="1.1"/>
<path d="M578.44 229.40L580.13 231.18L583.15 227.53" stroke="#000" stroke-width="1.50" fill="none" />
<rect x="587.20" y="224.40" width="10.40" height="9.60" fill="#3098e8" />
<rect x="531.50" y="258.90" width="162.00" height="22.00" fill="none" stroke="#c2c2c2" stroke-width="1"/>
<path d="M694.50 259.40V281.90H532.00" stroke="#fbfbfb" stroke-width="1.00" fill="none" />
<rect x="536.10" y="254.40" width="67.30" height="8.00" fill="#f0f0f0" />
<circle cx="544.60" cy="271.60" r="4.40" fill="#fff"/>
<path d="M541.70 274.50A4.10 4.10 0 0 0 547.50 268.70" stroke="#e4e4e4" stroke-width="1" fill="none"/>
<path d="M541.70 274.50A4.10 4.10 0 0 1 547.50 268.70" stroke="#6e6e6e" stroke-width="1.05" fill="none"/>
<circle cx="544.60" cy="271.60" r="1.65" fill="#000"/>
<circle cx="625.50" cy="271.60" r="4.40" fill="#fff"/>
<path d="M622.60 274.50A4.10 4.10 0 0 0 628.40 268.70" stroke="#e4e4e4" stroke-width="1" fill="none"/>
<path d="M622.60 274.50A4.10 4.10 0 0 1 628.40 268.70" stroke="#6e6e6e" stroke-width="1.05" fill="none"/>
<rect x="531.50" y="288.90" width="162.00" height="22.00" fill="none" stroke="#c2c2c2" stroke-width="1"/>
<path d="M694.50 289.40V311.90H532.00" stroke="#fbfbfb" stroke-width="1.00" fill="none" />
<rect x="536.10" y="284.40" width="47.20" height="8.00" fill="#f0f0f0" />
<circle cx="544.60" cy="301.80" r="4.40" fill="#fff"/>
<path d="M541.70 304.70A4.10 4.10 0 0 0 547.50 298.90" stroke="#e4e4e4" stroke-width="1" fill="none"/>
<path d="M541.70 304.70A4.10 4.10 0 0 1 547.50 298.90" stroke="#6e6e6e" stroke-width="1.05" fill="none"/>
<circle cx="544.60" cy="301.80" r="1.65" fill="#000"/>
<circle cx="625.50" cy="301.80" r="4.40" fill="#fff"/>
<path d="M622.60 304.70A4.10 4.10 0 0 0 628.40 298.90" stroke="#e4e4e4" stroke-width="1" fill="none"/>
<path d="M622.60 304.70A4.10 4.10 0 0 1 628.40 298.90" stroke="#6e6e6e" stroke-width="1.05" fill="none"/>
<rect x="531.50" y="318.10" width="162.00" height="58.80" fill="none" stroke="#c2c2c2" stroke-width="1"/>
<path d="M694.50 318.60V377.90H532.00" stroke="#fbfbfb" stroke-width="1.00" fill="none" />
<rect x="536.10" y="313.60" width="26.00" height="8.00" fill="#f0f0f0" />
<rect x="536.40" y="325.00" width="150.60" height="14.60" fill="#fff" />
<rect x="677.00" y="325.60" width="9.40" height="13.40" fill="#f2f2f2" />
<path d="M679.50 331.40h4.6l-2.3 2.7z" fill="#111"/>
<rect x="535.50" y="343.70" width="73.40" height="13.60" fill="#eeeeee" stroke="#adadad" stroke-width="1"/>
<path d="M608.90 344.20V357.30H536.00" stroke="#9e9e9e" stroke-width="1.00" fill="none" opacity="0.4"/>
<rect x="614.50" y="343.70" width="73.40" height="13.60" fill="#eeeeee" stroke="#adadad" stroke-width="1"/>
<path d="M687.90 344.20V357.30H615.00" stroke="#9e9e9e" stroke-width="1.00" fill="none" opacity="0.4"/>
<rect x="535.50" y="359.40" width="73.40" height="14.70" fill="#eeeeee" stroke="#adadad" stroke-width="1"/>
<path d="M608.90 359.90V374.10H536.00" stroke="#9e9e9e" stroke-width="1.00" fill="none" opacity="0.4"/>
<rect x="539.00" y="361.30" width="12.00" height="11.60" fill="#000" />
<path d="M602.00 366.20h4.6l-2.3 2.7z" fill="#111"/>
<rect x="614.50" y="359.40" width="73.40" height="14.70" fill="#eeeeee" stroke="#adadad" stroke-width="1"/>
<path d="M687.90 359.90V374.10H615.00" stroke="#9e9e9e" stroke-width="1.00" fill="none" opacity="0.4"/>
<rect x="617.50" y="361.30" width="12.00" height="11.60" fill="#fff" />
<path d="M680.90 366.20h4.6l-2.3 2.7z" fill="#111"/>
<rect x="531.50" y="385.50" width="162.00" height="76.40" fill="none" stroke="#c2c2c2" stroke-width="1"/>
<path d="M694.50 386.00V462.90H532.00" stroke="#fbfbfb" stroke-width="1.00" fill="none" />
<rect x="536.40" y="381.00" width="23.60" height="8.00" fill="#f0f0f0" />
<rect x="577.30" y="391.60" width="51.70" height="12.60" fill="#f4f4f4" />
<rect x="635.40" y="391.60" width="51.80" height="12.60" fill="#f4f4f4" />
<rect x="577.30" y="408.40" width="51.70" height="12.80" fill="#fff" />
<rect x="635.40" y="408.40" width="51.80" height="12.80" fill="#fff" />
<rect x="577.30" y="425.40" width="51.70" height="13.40" fill="#fff" />
<rect x="618.60" y="426.00" width="9.80" height="12.20" fill="#f2f2f2" />
<path d="M621.30 431.20h4.6l-2.3 2.7z" fill="#111"/>
<rect x="635.40" y="425.40" width="51.80" height="13.40" fill="#fff" />
<rect x="676.80" y="426.00" width="9.80" height="12.20" fill="#f2f2f2" />
<path d="M679.50 431.20h4.6l-2.3 2.7z" fill="#111"/>
<rect x="537.50" y="444.40" width="153.40" height="14.60" fill="#eeeeee" stroke="#adadad" stroke-width="1"/>
<path d="M690.90 444.90V459.00H538.00" stroke="#9e9e9e" stroke-width="1.00" fill="none" opacity="0.4"/>
<rect x="531.50" y="468.90" width="162.00" height="72.80" fill="none" stroke="#c2c2c2" stroke-width="1"/>
<path d="M694.50 469.40V542.70H532.00" stroke="#fbfbfb" stroke-width="1.00" fill="none" />
<rect x="536.40" y="464.40" width="35.60" height="8.00" fill="#f0f0f0" />
<rect x="604.80" y="484.30" width="9.00" height="9.00" fill="#fff" />
<path d="M613.30 484.80V492.80H605.30" stroke="#f8f8f8" stroke-width="1.00" fill="none" />
<path d="M605.30 493.30V484.80H613.80" stroke="#7e7e7e" stroke-width="1.00" fill="none" />
<path d="M606.30 492.30V485.80H612.80" stroke="#b9b9b9" stroke-width="1.00" fill="none" opacity="0.6"/>
<rect x="643.20" y="484.30" width="9.00" height="9.00" fill="#fff" />
<path d="M651.70 484.80V492.80H643.70" stroke="#f8f8f8" stroke-width="1.00" fill="none" />
<path d="M643.70 493.30V484.80H652.20" stroke="#7e7e7e" stroke-width="1.00" fill="none" />
<path d="M644.70 492.30V485.80H651.20" stroke="#b9b9b9" stroke-width="1.00" fill="none" opacity="0.6"/>
<rect x="604.80" y="497.50" width="9.00" height="9.00" fill="#f0f0f0" />
<path d="M613.30 498.00V506.00H605.30" stroke="#f8f8f8" stroke-width="1.00" fill="none" />
<path d="M605.30 506.50V498.00H613.80" stroke="#7e7e7e" stroke-width="1.00" fill="none" />
<path d="M606.30 505.50V499.00H612.80" stroke="#b9b9b9" stroke-width="1.00" fill="none" opacity="0.6"/>
<rect x="643.20" y="497.50" width="9.00" height="9.00" fill="#f0f0f0" />
<path d="M651.70 498.00V506.00H643.70" stroke="#f8f8f8" stroke-width="1.00" fill="none" />
<path d="M643.70 506.50V498.00H652.20" stroke="#7e7e7e" stroke-width="1.00" fill="none" />
<path d="M644.70 505.50V499.00H651.20" stroke="#b9b9b9" stroke-width="1.00" fill="none" opacity="0.6"/>
<rect x="604.80" y="510.10" width="9.00" height="9.00" fill="#f0f0f0" />
<path d="M613.30 510.60V518.60H605.30" stroke="#f8f8f8" stroke-width="1.00" fill="none" />
<path d="M605.30 519.10V510.60H613.80" stroke="#7e7e7e" stroke-width="1.00" fill="none" />
<path d="M606.30 518.10V511.60H612.80" stroke="#b9b9b9" stroke-width="1.00" fill="none" opacity="0.6"/>
<rect x="643.20" y="510.10" width="9.00" height="9.00" fill="#f0f0f0" />
<path d="M651.70 510.60V518.60H643.70" stroke="#f8f8f8" stroke-width="1.00" fill="none" />
<path d="M643.70 519.10V510.60H652.20" stroke="#7e7e7e" stroke-width="1.00" fill="none" />
<path d="M644.70 518.10V511.60H651.20" stroke="#b9b9b9" stroke-width="1.00" fill="none" opacity="0.6"/>
<rect x="537.50" y="524.30" width="153.40" height="14.60" fill="#eeeeee" stroke="#adadad" stroke-width="1"/>
<path d="M690.90 524.80V538.90H538.00" stroke="#9e9e9e" stroke-width="1.00" fill="none" opacity="0.4"/>
<rect x="645.00" y="560.70" width="65.40" height="18.20" fill="#f1f1f1" />
<path d="M646.50 576.90V562.20H708.40" stroke="#ffffff" stroke-width="1.00" fill="none" />
<path d="M708.10 562.70V576.60H647.00" stroke="#fafafa" stroke-width="1.00" fill="none" />
<path d="M645.60 578.90V561.30H710.40" stroke="#828282" stroke-width="1.25" fill="none" />
<path d="M709.45 560.70V577.95H645.00" stroke="#585858" stroke-width="1.90" fill="none" />
</svg>
<span class="t" style="left:7.00px;top:5.60px;font-size:10.00px;letter-spacing:-0.200px;color:#000;transform:scaleX(0.9042);">Radiated Emission Frequency-Domain Viewer</span>
<span class="t" style="left:12.00px;top:32.60px;font-size:10.00px;letter-spacing:-0.200px;color:#000;transform:scaleX(0.9542);">Waveform</span>
<span class="t" style="left:28.50px;top:506.70px;font-size:9.20px;letter-spacing:-0.200px;color:#000;transform:scaleX(0.9541);">[ X:9.74, Y:17.18 ]</span>
<span class="t" style="left:164.30px;top:506.70px;font-size:9.20px;letter-spacing:-0.200px;color:#000;transform:scaleX(0.9520);">MinY:0.000, MaxY:0.016, Peak-Peak:0.016</span>
<span class="t" style="left:578.60px;top:56.80px;font-size:9.90px;letter-spacing:-0.200px;color:#000;transform:scaleX(0.9571);">Plot Environment</span>
<span class="t" style="left:547.20px;top:77.60px;font-size:9.90px;letter-spacing:-0.200px;color:#000;transform:scaleX(0.9338);">Magnitude</span>
<span class="t" style="left:547.20px;top:88.80px;font-size:9.90px;letter-spacing:-0.200px;color:#000;transform:scaleX(0.9076);">Decibel</span>
<span class="t" style="left:547.20px;top:100.20px;font-size:9.90px;letter-spacing:-0.200px;color:#000;transform:scaleX(0.8605);">Phase</span>
<span class="t" style="left:621.40px;top:77.60px;font-size:9.90px;letter-spacing:-0.200px;color:#000;transform:scaleX(0.8485);">Real</span>
<span class="t" style="left:621.40px;top:88.80px;font-size:9.90px;letter-spacing:-0.200px;color:#000;transform:scaleX(0.9118);">Imaginary</span>
<span class="t" style="left:559.80px;top:116.90px;font-size:9.90px;letter-spacing:-0.200px;color:#000;transform:scaleX(0.9290);">Model_New</span>
<span class="t" style="left:573.80px;top:128.50px;font-size:9.90px;letter-spacing:-0.200px;color:#000;transform:scaleX(0.8728);">MCU_AA0</span>
<span class="t" style="left:589.30px;top:140.50px;font-size:9.90px;letter-spacing:-0.200px;color:#000;transform:scaleX(0.8906);">TRACE_0.100</span>
<span class="t" style="left:602.00px;top:152.20px;font-size:9.90px;letter-spacing:-0.200px;color:#000;transform:scaleX(0.9758);">VT1_X3.25Y-5.20</span>
<span class="t" style="left:602.00px;top:164.20px;font-size:9.90px;letter-spacing:-0.200px;color:#000;transform:scaleX(0.9686);">VV2_X2.95Y-4.90</span>
<span class="t" style="left:589.30px;top:175.70px;font-size:9.90px;letter-spacing:-0.200px;color:#000;transform:scaleX(0.8906);">TRACE_0.100</span>
<span class="t" style="left:602.00px;top:187.80px;font-size:9.90px;letter-spacing:-0.200px;color:#000;transform:scaleX(0.9676);">VT62_X-19.20Y3.6</span>
<span class="t" style="left:602.00px;top:199.80px;font-size:9.90px;letter-spacing:-0.200px;color:#000;transform:scaleX(0.9676);">VT63_X-18.80Y4.0</span>
<span class="t" style="left:589.30px;top:211.30px;font-size:9.90px;letter-spacing:-0.200px;color:#000;transform:scaleX(0.8906);">TRACE_0.100</span>
<span class="t" style="left:602.00px;top:223.40px;font-size:9.90px;letter-spacing:-0.200px;color:#000;transform:scaleX(0.9719);">VT95_X-19.20Y-16</span>
<span class="t" style="left:537.60px;top:252.30px;font-size:9.90px;letter-spacing:-0.200px;color:#000;transform:scaleX(0.9233);">Frequency scale</span>
<span class="t" style="left:554.00px;top:266.40px;font-size:9.90px;letter-spacing:-0.200px;color:#000;transform:scaleX(0.8812);">Linear</span>
<span class="t" style="left:633.50px;top:266.40px;font-size:9.90px;letter-spacing:-0.200px;color:#000;transform:scaleX(0.9233);">Log</span>
<span class="t" style="left:537.60px;top:282.30px;font-size:9.90px;letter-spacing:-0.200px;color:#000;transform:scaleX(0.9160);">Value scale</span>
<span class="t" style="left:554.00px;top:296.60px;font-size:9.90px;letter-spacing:-0.200px;color:#000;transform:scaleX(0.8812);">Linear</span>
<span class="t" style="left:633.50px;top:296.60px;font-size:9.90px;letter-spacing:-0.200px;color:#000;transform:scaleX(0.9233);">Log</span>
<span class="t" style="left:537.60px;top:311.50px;font-size:9.90px;letter-spacing:-0.200px;color:#000;transform:scaleX(0.9384);">Zoom</span>
<span class="t" style="left:538.60px;top:326.60px;font-size:9.90px;letter-spacing:-0.200px;color:#000;transform:scaleX(0.9115);">X,Y</span>
<span class="t" style="left:560.60px;top:344.40px;font-size:9.90px;letter-spacing:-0.200px;color:#000;transform:scaleX(0.9506);">Zoom</span>
<span class="t" style="left:638.80px;top:344.40px;font-size:9.90px;letter-spacing:-0.200px;color:#000;transform:scaleX(0.9492);">Reset</span>
<span class="t" style="left:571.00px;top:361.20px;font-size:9.90px;letter-spacing:-0.200px;color:#000;transform:scaleX(0.7767);">BG</span>
<span class="t" style="left:644.20px;top:361.20px;font-size:9.90px;letter-spacing:-0.200px;color:#000;transform:scaleX(0.9213);">Label</span>
<span class="t" style="left:537.90px;top:378.90px;font-size:9.90px;letter-spacing:-0.200px;color:#000;transform:scaleX(0.8869);">Label</span>
<span class="t" style="left:535.20px;top:391.60px;font-size:9.90px;letter-spacing:-0.200px;color:#000;transform:scaleX(0.9097);">Name</span>
<span class="t" style="left:580.20px;top:391.80px;font-size:9.90px;letter-spacing:-0.200px;color:#000;transform:scaleX(0.9293);">Frequency</span>
<span class="t" style="left:638.20px;top:391.80px;font-size:9.90px;letter-spacing:-0.200px;color:#000;transform:scaleX(0.8986);">Value</span>
<span class="t" style="left:535.20px;top:408.60px;font-size:9.90px;letter-spacing:-0.146px;color:#000;">Interval</span>
<span class="t" style="left:580.40px;top:408.80px;font-size:9.90px;letter-spacing:0.000px;color:#000;">2</span>
<span class="t" style="left:638.20px;top:408.80px;font-size:9.90px;letter-spacing:-0.200px;color:#000;transform:scaleX(0.9745);">1.25</span>
<span class="t" style="left:535.20px;top:425.60px;font-size:9.90px;letter-spacing:-0.200px;color:#000;transform:scaleX(0.9108);">Decimal</span>
<span class="t" style="left:580.40px;top:426.60px;font-size:9.90px;letter-spacing:-0.200px;color:#000;transform:scaleX(0.8154);">Giga</span>
<span class="t" style="left:638.20px;top:426.60px;font-size:9.90px;letter-spacing:-0.200px;color:#000;transform:scaleX(0.8224);">milli</span>
<span class="t" style="left:602.70px;top:446.20px;font-size:9.90px;letter-spacing:-0.200px;color:#000;transform:scaleX(0.9550);">Apply</span>
<span class="t" style="left:537.90px;top:462.30px;font-size:9.90px;letter-spacing:-0.200px;color:#000;transform:scaleX(0.8781);">Measure</span>
<span class="t" style="left:605.60px;top:470.60px;font-size:9.90px;letter-spacing:0.000px;color:#000;">X</span>
<span class="t" style="left:644.50px;top:470.60px;font-size:9.90px;letter-spacing:0.000px;color:#000;">Y</span>
<span class="t" style="left:545.60px;top:483.20px;font-size:9.90px;letter-spacing:-0.200px;color:#000;transform:scaleX(0.8984);">Line</span>
<span class="t" style="left:545.60px;top:496.80px;font-size:9.90px;letter-spacing:-0.200px;color:#000;transform:scaleX(0.8865);">Clipping</span>
<span class="t" style="left:545.60px;top:509.60px;font-size:9.90px;letter-spacing:-0.200px;color:#000;transform:scaleX(0.9155);">Distance</span>
<span class="t" style="left:602.70px;top:525.80px;font-size:9.90px;letter-spacing:-0.200px;color:#000;transform:scaleX(0.9452);">Reset</span>
<span class="t" style="left:667.50px;top:564.00px;font-size:9.90px;letter-spacing:-0.200px;color:#000;transform:scaleX(0.8349);">Close</span>
</body></html>
